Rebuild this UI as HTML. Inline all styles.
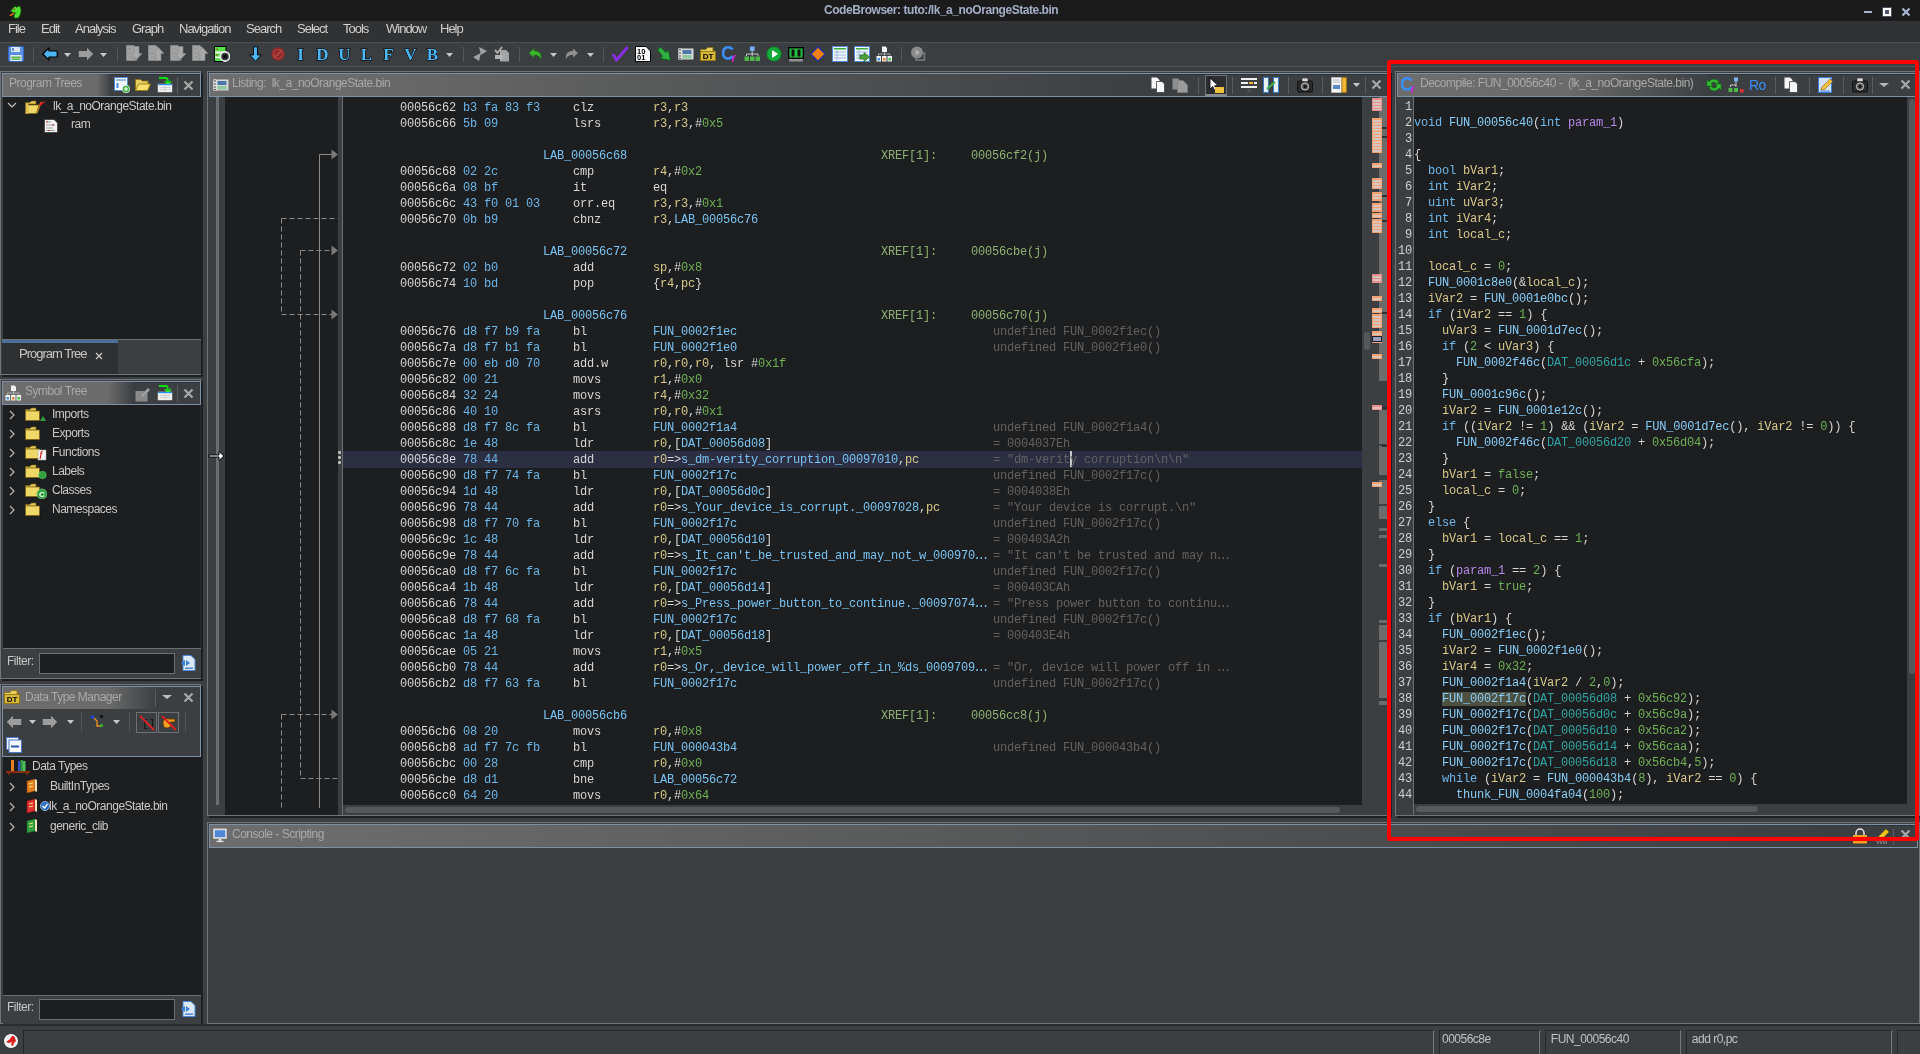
<!DOCTYPE html><html><head><meta charset="utf-8"><style>
*{margin:0;padding:0;box-sizing:border-box}
html,body{width:1920px;height:1054px;overflow:hidden;background:#3c3f41}
#root{position:absolute;left:0;top:0;width:1920px;height:1054px;overflow:hidden;will-change:transform;background:#3c3f41}
#root>div,#root>svg{position:absolute}
.ui{position:absolute;font-family:"Liberation Sans",sans-serif;font-size:12px;letter-spacing:-0.5px;color:#c4c4c4;white-space:pre;line-height:16px}
.mono{position:absolute;font-family:"Liberation Mono",monospace;font-size:12px;letter-spacing:-0.2px;white-space:pre;line-height:16px;color:#d6d6d6}
.hdr{position:absolute;border:1px solid #7d90a6}
</style></head><body><div id="root">
<div style="left:0px;top:0px;width:1920px;height:21px;background:#1b1b1b"></div>
<div class="ui" style="left:824px;top:2px;font-weight:bold;color:#a3aec6;letter-spacing:-0.45px">CodeBrowser: tuto:/lk_a_noOrangeState.bin</div>
<div style="left:0px;top:21px;width:1920px;height:21px;background:#303234"></div>
<div class="ui" style="left:8px;top:21px;color:#cfcfcf;font-size:13px;letter-spacing:-1px">File</div>
<div class="ui" style="left:41px;top:21px;color:#cfcfcf;font-size:13px;letter-spacing:-1px">Edit</div>
<div class="ui" style="left:75px;top:21px;color:#cfcfcf;font-size:13px;letter-spacing:-1px">Analysis</div>
<div class="ui" style="left:132px;top:21px;color:#cfcfcf;font-size:13px;letter-spacing:-1px">Graph</div>
<div class="ui" style="left:179px;top:21px;color:#cfcfcf;font-size:13px;letter-spacing:-1px">Navigation</div>
<div class="ui" style="left:246px;top:21px;color:#cfcfcf;font-size:13px;letter-spacing:-1px">Search</div>
<div class="ui" style="left:297px;top:21px;color:#cfcfcf;font-size:13px;letter-spacing:-1px">Select</div>
<div class="ui" style="left:343px;top:21px;color:#cfcfcf;font-size:13px;letter-spacing:-1px">Tools</div>
<div class="ui" style="left:386px;top:21px;color:#cfcfcf;font-size:13px;letter-spacing:-1px">Window</div>
<div class="ui" style="left:440px;top:21px;color:#cfcfcf;font-size:13px;letter-spacing:-1px">Help</div>
<div style="left:0px;top:42px;width:1920px;height:25px;background:#3b3e40;border-top:1px solid #4d5053;border-bottom:1px solid #505356"></div>
<div style="left:0px;top:67px;width:1920px;height:5px;background:#3b3e40"></div>
<div style="left:0px;top:71px;width:201px;height:304px;background:#3c3f41;border:1px solid #727578;box-shadow:2px 2px 0 #1f2022"></div>
<div style="left:2px;top:73px;width:199px;height:24px;border:1px solid #7d90a6;background:#3c3f41;box-shadow:inset 1px 1px 0 #2f3133"></div>
<div style="left:3px;top:74px;width:108px;height:22px;background:linear-gradient(to right,#6d6d6d 0px,#6b6b6b 94px,#3c3f41 100%)"></div>
<div style="left:3px;top:97px;width:198px;height:242px;background:#1d1e20"></div>
<div class="ui" style="left:9px;top:75px;color:#a9a9a9">Program Trees</div>
<div style="left:2px;top:339px;width:199px;height:35px;background:#3c3f41;border-top:1px solid #6c6f72"></div>
<div style="left:2px;top:340px;width:116px;height:34px;background:#2e3032;border-top:3px solid #4a6f9c"></div>
<div class="ui" style="left:19px;top:346px;color:#c6c6c6;font-size:13px;letter-spacing:-1px">Program Tree</div>
<div style="left:0px;top:379px;width:201px;height:300px;background:#3c3f41;border:1px solid #727578;box-shadow:2px 2px 0 #1f2022"></div>
<div style="left:2px;top:381px;width:199px;height:24px;border:1px solid #7d90a6;background:#3c3f41;box-shadow:inset 1px 1px 0 #2f3133"></div>
<div style="left:3px;top:382px;width:130px;height:22px;background:linear-gradient(to right,#6d6d6d 0px,#6b6b6b 105px,#3c3f41 100%)"></div>
<div style="left:3px;top:405px;width:198px;height:243px;background:#1d1e20;border-right:1px solid #2a2b2d"></div>
<div class="ui" style="left:25px;top:383px;color:#a9a9a9">Symbol Tree</div>
<div style="left:3px;top:648px;width:198px;height:30px;background:#3c3f41;border-top:1px solid #6c6f72"></div>
<div class="ui" style="left:7px;top:653px;color:#c6c6c6">Filter:</div>
<div style="left:39px;top:653px;width:136px;height:21px;background:#1d1e20;border:1px solid #6c6f72"></div>
<div style="left:0px;top:684px;width:201px;height:340px;background:#3c3f41;border:1px solid #727578;box-shadow:2px 2px 0 #1f2022"></div>
<div style="left:2px;top:686px;width:199px;height:71px;border:1px solid #7d90a6;background:#3c3f41"></div>
<div style="left:3px;top:687px;width:153px;height:22px;background:linear-gradient(to right,#6d6d6d 0px,#6b6b6b 105px,#3c3f41 100%)"></div>
<div class="ui" style="left:25px;top:689px;color:#a9a9a9">Data Type Manager</div>
<div style="left:3px;top:757px;width:198px;height:238px;background:#1d1e20"></div>
<div style="left:3px;top:995px;width:198px;height:29px;background:#3c3f41;border-top:1px solid #6c6f72"></div>
<div class="ui" style="left:7px;top:999px;color:#c6c6c6">Filter:</div>
<div style="left:39px;top:999px;width:136px;height:21px;background:#1d1e20;border:1px solid #6c6f72"></div>
<div style="left:207px;top:71px;width:1183px;height:745px;background:#3c3f41;border:1px solid #727578;box-shadow:2px 2px 0 #1f2022"></div>
<div style="left:209px;top:73px;width:1179px;height:24px;border:1px solid #7d90a6;background:#3c3f41;box-shadow:inset 1px 1px 0 #2f3133"></div>
<div style="left:210px;top:74px;width:940px;height:22px;background:linear-gradient(to right,#6d6d6d 0px,#6b6b6b 126px,#3c3f41 100%)"></div>
<div class="ui" style="left:232px;top:75px;color:#a9a9a9">Listing:  lk_a_noOrangeState.bin</div>
<div style="left:209px;top:97px;width:16px;height:718px;background:#3c3f41"></div>
<div style="left:216px;top:97px;width:3px;height:708px;background:#6b6e71"></div>
<div style="left:225px;top:97px;width:113px;height:718px;background:#1d1e20"></div>
<div style="left:338px;top:97px;width:4px;height:718px;background:#3c3f41"></div>
<div style="left:342px;top:97px;width:1px;height:718px;background:#6b6e71"></div>
<div style="left:343px;top:97px;width:1019px;height:708px;background:#1d1e20"></div>
<div style="left:343px;top:805px;width:1019px;height:10px;background:#3c3f41"></div>
<div style="left:1362px;top:97px;width:25px;height:718px;background:#3c3f41"></div>
<div style="left:1395px;top:71px;width:525px;height:745px;background:#3c3f41;border:1px solid #727578;box-shadow:2px 2px 0 #1f2022"></div>
<div style="left:1397px;top:73px;width:520px;height:24px;border:1px solid #7d90a6;background:#3c3f41;box-shadow:inset 1px 1px 0 #2f3133"></div>
<div style="left:1398px;top:74px;width:311px;height:22px;background:linear-gradient(to right,#6d6d6d 0px,#6b6b6b 168px,#3c3f41 100%)"></div>
<div class="ui" style="left:1420px;top:75px;color:#a9a9a9">Decompile: FUN_00056c40 -  (lk_a_noOrangeState.bin)</div>
<div style="left:1397px;top:97px;width:16px;height:718px;background:#3c3f41"></div>
<div style="left:1413px;top:97px;width:1px;height:718px;background:#6b6e71"></div>
<div style="left:1414px;top:97px;width:493px;height:707px;background:#1d1e20"></div>
<div style="left:1907px;top:97px;width:10px;height:718px;background:#3c3f41"></div>
<div style="left:207px;top:822px;width:1713px;height:202px;background:#3c3f41;border:1px solid #727578;box-shadow:2px 2px 0 #1f2022"></div>
<div style="left:209px;top:824px;width:1709px;height:24px;border:1px solid #7d90a6;background:#3c3f41;box-shadow:inset 1px 1px 0 #2f3133"></div>
<div style="left:210px;top:825px;width:1640px;height:22px;background:linear-gradient(to right,#6d6d6d 0px,#6b6b6b 126px,#3c3f41 100%)"></div>
<div class="ui" style="left:232px;top:826px;color:#a9a9a9">Console - Scripting</div>
<div style="left:0px;top:1024px;width:1920px;height:2px;background:#2a2b2d"></div>
<div style="left:0px;top:1026px;width:1920px;height:28px;background:#3c3f41"></div>
<div style="left:343px;top:451px;width:1019px;height:17px;background:#2c2e42"></div>
<div style="left:338px;top:451px;width:3px;height:3px;background:#bdbdbd;border-radius:1px"></div>
<div style="left:338px;top:456px;width:3px;height:3px;background:#bdbdbd;border-radius:1px"></div>
<div style="left:338px;top:461px;width:3px;height:3px;background:#bdbdbd;border-radius:1px"></div>
<div style="left:1070px;top:451px;width:2px;height:16px;background:#c8c8c8"></div>
<div class="mono" style="left:400px;top:100px;color:#d6d6d6">00056c62</div>
<div class="mono" style="left:463px;top:100px;color:#6ab6ea">b3 fa 83 f3</div>
<div class="mono" style="left:573px;top:100px;color:#d6d6d6">clz</div>
<div class="mono" style="left:653px;top:100px"><span style="color:#d9c98a">r3</span><span style="color:#d6d6d6">,</span><span style="color:#d9c98a">r3</span></div>
<div class="mono" style="left:400px;top:116px;color:#d6d6d6">00056c66</div>
<div class="mono" style="left:463px;top:116px;color:#6ab6ea">5b 09</div>
<div class="mono" style="left:573px;top:116px;color:#d6d6d6">lsrs</div>
<div class="mono" style="left:653px;top:116px"><span style="color:#d9c98a">r3</span><span style="color:#d6d6d6">,</span><span style="color:#d9c98a">r3</span><span style="color:#d6d6d6">,</span><span style="color:#d6d6d6">#</span><span style="color:#6fb255">0x5</span></div>
<div class="mono" style="left:543px;top:148px;color:#78c3f2">LAB_00056c68</div>
<div class="mono" style="left:881px;top:148px;color:#8db070">XREF[1]:</div>
<div class="mono" style="left:971px;top:148px;color:#8db070">00056cf2(j)</div>
<div class="mono" style="left:400px;top:164px;color:#d6d6d6">00056c68</div>
<div class="mono" style="left:463px;top:164px;color:#6ab6ea">02 2c</div>
<div class="mono" style="left:573px;top:164px;color:#d6d6d6">cmp</div>
<div class="mono" style="left:653px;top:164px"><span style="color:#d9c98a">r4</span><span style="color:#d6d6d6">,</span><span style="color:#d6d6d6">#</span><span style="color:#6fb255">0x2</span></div>
<div class="mono" style="left:400px;top:180px;color:#d6d6d6">00056c6a</div>
<div class="mono" style="left:463px;top:180px;color:#6ab6ea">08 bf</div>
<div class="mono" style="left:573px;top:180px;color:#d6d6d6">it</div>
<div class="mono" style="left:653px;top:180px"><span style="color:#d6d6d6">eq</span></div>
<div class="mono" style="left:400px;top:196px;color:#d6d6d6">00056c6c</div>
<div class="mono" style="left:463px;top:196px;color:#6ab6ea">43 f0 01 03</div>
<div class="mono" style="left:573px;top:196px;color:#d6d6d6">orr.eq</div>
<div class="mono" style="left:653px;top:196px"><span style="color:#d9c98a">r3</span><span style="color:#d6d6d6">,</span><span style="color:#d9c98a">r3</span><span style="color:#d6d6d6">,</span><span style="color:#d6d6d6">#</span><span style="color:#6fb255">0x1</span></div>
<div class="mono" style="left:400px;top:212px;color:#d6d6d6">00056c70</div>
<div class="mono" style="left:463px;top:212px;color:#6ab6ea">0b b9</div>
<div class="mono" style="left:573px;top:212px;color:#d6d6d6">cbnz</div>
<div class="mono" style="left:653px;top:212px"><span style="color:#d9c98a">r3</span><span style="color:#d6d6d6">,</span><span style="color:#78c3f2">LAB_00056c76</span></div>
<div class="mono" style="left:543px;top:244px;color:#78c3f2">LAB_00056c72</div>
<div class="mono" style="left:881px;top:244px;color:#8db070">XREF[1]:</div>
<div class="mono" style="left:971px;top:244px;color:#8db070">00056cbe(j)</div>
<div class="mono" style="left:400px;top:260px;color:#d6d6d6">00056c72</div>
<div class="mono" style="left:463px;top:260px;color:#6ab6ea">02 b0</div>
<div class="mono" style="left:573px;top:260px;color:#d6d6d6">add</div>
<div class="mono" style="left:653px;top:260px"><span style="color:#d9c98a">sp</span><span style="color:#d6d6d6">,</span><span style="color:#d6d6d6">#</span><span style="color:#6fb255">0x8</span></div>
<div class="mono" style="left:400px;top:276px;color:#d6d6d6">00056c74</div>
<div class="mono" style="left:463px;top:276px;color:#6ab6ea">10 bd</div>
<div class="mono" style="left:573px;top:276px;color:#d6d6d6">pop</div>
<div class="mono" style="left:653px;top:276px"><span style="color:#d6d6d6">{</span><span style="color:#d9c98a">r4</span><span style="color:#d6d6d6">,</span><span style="color:#d9c98a">pc</span><span style="color:#d6d6d6">}</span></div>
<div class="mono" style="left:543px;top:308px;color:#78c3f2">LAB_00056c76</div>
<div class="mono" style="left:881px;top:308px;color:#8db070">XREF[1]:</div>
<div class="mono" style="left:971px;top:308px;color:#8db070">00056c70(j)</div>
<div class="mono" style="left:400px;top:324px;color:#d6d6d6">00056c76</div>
<div class="mono" style="left:463px;top:324px;color:#6ab6ea">d8 f7 b9 fa</div>
<div class="mono" style="left:573px;top:324px;color:#d6d6d6">bl</div>
<div class="mono" style="left:653px;top:324px"><span style="color:#78c3f2">FUN_0002f1ec</span></div>
<div class="mono" style="left:993px;top:324px;color:#626262">undefined FUN_0002f1ec()</div>
<div class="mono" style="left:400px;top:340px;color:#d6d6d6">00056c7a</div>
<div class="mono" style="left:463px;top:340px;color:#6ab6ea">d8 f7 b1 fa</div>
<div class="mono" style="left:573px;top:340px;color:#d6d6d6">bl</div>
<div class="mono" style="left:653px;top:340px"><span style="color:#78c3f2">FUN_0002f1e0</span></div>
<div class="mono" style="left:993px;top:340px;color:#626262">undefined FUN_0002f1e0()</div>
<div class="mono" style="left:400px;top:356px;color:#d6d6d6">00056c7e</div>
<div class="mono" style="left:463px;top:356px;color:#6ab6ea">00 eb d0 70</div>
<div class="mono" style="left:573px;top:356px;color:#d6d6d6">add.w</div>
<div class="mono" style="left:653px;top:356px"><span style="color:#d9c98a">r0</span><span style="color:#d6d6d6">,</span><span style="color:#d9c98a">r0</span><span style="color:#d6d6d6">,</span><span style="color:#d9c98a">r0</span><span style="color:#d6d6d6">, lsr </span><span style="color:#d6d6d6">#</span><span style="color:#6fb255">0x1f</span></div>
<div class="mono" style="left:400px;top:372px;color:#d6d6d6">00056c82</div>
<div class="mono" style="left:463px;top:372px;color:#6ab6ea">00 21</div>
<div class="mono" style="left:573px;top:372px;color:#d6d6d6">movs</div>
<div class="mono" style="left:653px;top:372px"><span style="color:#d9c98a">r1</span><span style="color:#d6d6d6">,</span><span style="color:#d6d6d6">#</span><span style="color:#6fb255">0x0</span></div>
<div class="mono" style="left:400px;top:388px;color:#d6d6d6">00056c84</div>
<div class="mono" style="left:463px;top:388px;color:#6ab6ea">32 24</div>
<div class="mono" style="left:573px;top:388px;color:#d6d6d6">movs</div>
<div class="mono" style="left:653px;top:388px"><span style="color:#d9c98a">r4</span><span style="color:#d6d6d6">,</span><span style="color:#d6d6d6">#</span><span style="color:#6fb255">0x32</span></div>
<div class="mono" style="left:400px;top:404px;color:#d6d6d6">00056c86</div>
<div class="mono" style="left:463px;top:404px;color:#6ab6ea">40 10</div>
<div class="mono" style="left:573px;top:404px;color:#d6d6d6">asrs</div>
<div class="mono" style="left:653px;top:404px"><span style="color:#d9c98a">r0</span><span style="color:#d6d6d6">,</span><span style="color:#d9c98a">r0</span><span style="color:#d6d6d6">,</span><span style="color:#d6d6d6">#</span><span style="color:#6fb255">0x1</span></div>
<div class="mono" style="left:400px;top:420px;color:#d6d6d6">00056c88</div>
<div class="mono" style="left:463px;top:420px;color:#6ab6ea">d8 f7 8c fa</div>
<div class="mono" style="left:573px;top:420px;color:#d6d6d6">bl</div>
<div class="mono" style="left:653px;top:420px"><span style="color:#78c3f2">FUN_0002f1a4</span></div>
<div class="mono" style="left:993px;top:420px;color:#626262">undefined FUN_0002f1a4()</div>
<div class="mono" style="left:400px;top:436px;color:#d6d6d6">00056c8c</div>
<div class="mono" style="left:463px;top:436px;color:#6ab6ea">1e 48</div>
<div class="mono" style="left:573px;top:436px;color:#d6d6d6">ldr</div>
<div class="mono" style="left:653px;top:436px"><span style="color:#d9c98a">r0</span><span style="color:#d6d6d6">,[</span><span style="color:#78c3f2">DAT_00056d08</span><span style="color:#d6d6d6">]</span></div>
<div class="mono" style="left:993px;top:436px;color:#626262">= 0004037Eh</div>
<div class="mono" style="left:400px;top:452px;color:#d6d6d6">00056c8e</div>
<div class="mono" style="left:463px;top:452px;color:#6ab6ea">78 44</div>
<div class="mono" style="left:573px;top:452px;color:#d6d6d6">add</div>
<div class="mono" style="left:653px;top:452px"><span style="color:#d9c98a">r0</span><span style="color:#d6d6d6">=&gt;</span><span style="color:#78c3f2">s_dm-verity_corruption_00097010</span><span style="color:#d6d6d6">,</span><span style="color:#d9c98a">pc</span></div>
<div class="mono" style="left:993px;top:452px;color:#626262">= &quot;dm-verity corruption\n\n&quot;</div>
<div class="mono" style="left:400px;top:468px;color:#d6d6d6">00056c90</div>
<div class="mono" style="left:463px;top:468px;color:#6ab6ea">d8 f7 74 fa</div>
<div class="mono" style="left:573px;top:468px;color:#d6d6d6">bl</div>
<div class="mono" style="left:653px;top:468px"><span style="color:#78c3f2">FUN_0002f17c</span></div>
<div class="mono" style="left:993px;top:468px;color:#626262">undefined FUN_0002f17c()</div>
<div class="mono" style="left:400px;top:484px;color:#d6d6d6">00056c94</div>
<div class="mono" style="left:463px;top:484px;color:#6ab6ea">1d 48</div>
<div class="mono" style="left:573px;top:484px;color:#d6d6d6">ldr</div>
<div class="mono" style="left:653px;top:484px"><span style="color:#d9c98a">r0</span><span style="color:#d6d6d6">,[</span><span style="color:#78c3f2">DAT_00056d0c</span><span style="color:#d6d6d6">]</span></div>
<div class="mono" style="left:993px;top:484px;color:#626262">= 0004038Eh</div>
<div class="mono" style="left:400px;top:500px;color:#d6d6d6">00056c96</div>
<div class="mono" style="left:463px;top:500px;color:#6ab6ea">78 44</div>
<div class="mono" style="left:573px;top:500px;color:#d6d6d6">add</div>
<div class="mono" style="left:653px;top:500px"><span style="color:#d9c98a">r0</span><span style="color:#d6d6d6">=&gt;</span><span style="color:#78c3f2">s_Your_device_is_corrupt._00097028</span><span style="color:#d6d6d6">,</span><span style="color:#d9c98a">pc</span></div>
<div class="mono" style="left:993px;top:500px;color:#626262">= &quot;Your device is corrupt.\n&quot;</div>
<div class="mono" style="left:400px;top:516px;color:#d6d6d6">00056c98</div>
<div class="mono" style="left:463px;top:516px;color:#6ab6ea">d8 f7 70 fa</div>
<div class="mono" style="left:573px;top:516px;color:#d6d6d6">bl</div>
<div class="mono" style="left:653px;top:516px"><span style="color:#78c3f2">FUN_0002f17c</span></div>
<div class="mono" style="left:993px;top:516px;color:#626262">undefined FUN_0002f17c()</div>
<div class="mono" style="left:400px;top:532px;color:#d6d6d6">00056c9c</div>
<div class="mono" style="left:463px;top:532px;color:#6ab6ea">1c 48</div>
<div class="mono" style="left:573px;top:532px;color:#d6d6d6">ldr</div>
<div class="mono" style="left:653px;top:532px"><span style="color:#d9c98a">r0</span><span style="color:#d6d6d6">,[</span><span style="color:#78c3f2">DAT_00056d10</span><span style="color:#d6d6d6">]</span></div>
<div class="mono" style="left:993px;top:532px;color:#626262">= 000403A2h</div>
<div class="mono" style="left:400px;top:548px;color:#d6d6d6">00056c9e</div>
<div class="mono" style="left:463px;top:548px;color:#6ab6ea">78 44</div>
<div class="mono" style="left:573px;top:548px;color:#d6d6d6">add</div>
<div class="mono" style="left:653px;top:548px"><span style="color:#d9c98a">r0</span><span style="color:#d6d6d6">=&gt;</span><span style="color:#78c3f2">s_It_can&#x27;t_be_trusted_and_may_not_w_000970<span style="letter-spacing:-3px;margin-left:-1.5px">...</span></span></div>
<div class="mono" style="left:993px;top:548px;color:#626262">= &quot;It can&#x27;t be trusted and may n<span style="letter-spacing:-3px;margin-left:-1.5px">...</span></div>
<div class="mono" style="left:400px;top:564px;color:#d6d6d6">00056ca0</div>
<div class="mono" style="left:463px;top:564px;color:#6ab6ea">d8 f7 6c fa</div>
<div class="mono" style="left:573px;top:564px;color:#d6d6d6">bl</div>
<div class="mono" style="left:653px;top:564px"><span style="color:#78c3f2">FUN_0002f17c</span></div>
<div class="mono" style="left:993px;top:564px;color:#626262">undefined FUN_0002f17c()</div>
<div class="mono" style="left:400px;top:580px;color:#d6d6d6">00056ca4</div>
<div class="mono" style="left:463px;top:580px;color:#6ab6ea">1b 48</div>
<div class="mono" style="left:573px;top:580px;color:#d6d6d6">ldr</div>
<div class="mono" style="left:653px;top:580px"><span style="color:#d9c98a">r0</span><span style="color:#d6d6d6">,[</span><span style="color:#78c3f2">DAT_00056d14</span><span style="color:#d6d6d6">]</span></div>
<div class="mono" style="left:993px;top:580px;color:#626262">= 000403CAh</div>
<div class="mono" style="left:400px;top:596px;color:#d6d6d6">00056ca6</div>
<div class="mono" style="left:463px;top:596px;color:#6ab6ea">78 44</div>
<div class="mono" style="left:573px;top:596px;color:#d6d6d6">add</div>
<div class="mono" style="left:653px;top:596px"><span style="color:#d9c98a">r0</span><span style="color:#d6d6d6">=&gt;</span><span style="color:#78c3f2">s_Press_power_button_to_continue._00097074<span style="letter-spacing:-3px;margin-left:-1.5px">...</span></span></div>
<div class="mono" style="left:993px;top:596px;color:#626262">= &quot;Press power button to continu<span style="letter-spacing:-3px;margin-left:-1.5px">...</span></div>
<div class="mono" style="left:400px;top:612px;color:#d6d6d6">00056ca8</div>
<div class="mono" style="left:463px;top:612px;color:#6ab6ea">d8 f7 68 fa</div>
<div class="mono" style="left:573px;top:612px;color:#d6d6d6">bl</div>
<div class="mono" style="left:653px;top:612px"><span style="color:#78c3f2">FUN_0002f17c</span></div>
<div class="mono" style="left:993px;top:612px;color:#626262">undefined FUN_0002f17c()</div>
<div class="mono" style="left:400px;top:628px;color:#d6d6d6">00056cac</div>
<div class="mono" style="left:463px;top:628px;color:#6ab6ea">1a 48</div>
<div class="mono" style="left:573px;top:628px;color:#d6d6d6">ldr</div>
<div class="mono" style="left:653px;top:628px"><span style="color:#d9c98a">r0</span><span style="color:#d6d6d6">,[</span><span style="color:#78c3f2">DAT_00056d18</span><span style="color:#d6d6d6">]</span></div>
<div class="mono" style="left:993px;top:628px;color:#626262">= 000403E4h</div>
<div class="mono" style="left:400px;top:644px;color:#d6d6d6">00056cae</div>
<div class="mono" style="left:463px;top:644px;color:#6ab6ea">05 21</div>
<div class="mono" style="left:573px;top:644px;color:#d6d6d6">movs</div>
<div class="mono" style="left:653px;top:644px"><span style="color:#d9c98a">r1</span><span style="color:#d6d6d6">,</span><span style="color:#d6d6d6">#</span><span style="color:#6fb255">0x5</span></div>
<div class="mono" style="left:400px;top:660px;color:#d6d6d6">00056cb0</div>
<div class="mono" style="left:463px;top:660px;color:#6ab6ea">78 44</div>
<div class="mono" style="left:573px;top:660px;color:#d6d6d6">add</div>
<div class="mono" style="left:653px;top:660px"><span style="color:#d9c98a">r0</span><span style="color:#d6d6d6">=&gt;</span><span style="color:#78c3f2">s_Or,_device_will_power_off_in_%ds_0009709<span style="letter-spacing:-3px;margin-left:-1.5px">...</span></span></div>
<div class="mono" style="left:993px;top:660px;color:#626262">= &quot;Or, device will power off in <span style="letter-spacing:-3px;margin-left:-1.5px">...</span></div>
<div class="mono" style="left:400px;top:676px;color:#d6d6d6">00056cb2</div>
<div class="mono" style="left:463px;top:676px;color:#6ab6ea">d8 f7 63 fa</div>
<div class="mono" style="left:573px;top:676px;color:#d6d6d6">bl</div>
<div class="mono" style="left:653px;top:676px"><span style="color:#78c3f2">FUN_0002f17c</span></div>
<div class="mono" style="left:993px;top:676px;color:#626262">undefined FUN_0002f17c()</div>
<div class="mono" style="left:543px;top:708px;color:#78c3f2">LAB_00056cb6</div>
<div class="mono" style="left:881px;top:708px;color:#8db070">XREF[1]:</div>
<div class="mono" style="left:971px;top:708px;color:#8db070">00056cc8(j)</div>
<div class="mono" style="left:400px;top:724px;color:#d6d6d6">00056cb6</div>
<div class="mono" style="left:463px;top:724px;color:#6ab6ea">08 20</div>
<div class="mono" style="left:573px;top:724px;color:#d6d6d6">movs</div>
<div class="mono" style="left:653px;top:724px"><span style="color:#d9c98a">r0</span><span style="color:#d6d6d6">,</span><span style="color:#d6d6d6">#</span><span style="color:#6fb255">0x8</span></div>
<div class="mono" style="left:400px;top:740px;color:#d6d6d6">00056cb8</div>
<div class="mono" style="left:463px;top:740px;color:#6ab6ea">ad f7 7c fb</div>
<div class="mono" style="left:573px;top:740px;color:#d6d6d6">bl</div>
<div class="mono" style="left:653px;top:740px"><span style="color:#78c3f2">FUN_000043b4</span></div>
<div class="mono" style="left:993px;top:740px;color:#626262">undefined FUN_000043b4()</div>
<div class="mono" style="left:400px;top:756px;color:#d6d6d6">00056cbc</div>
<div class="mono" style="left:463px;top:756px;color:#6ab6ea">00 28</div>
<div class="mono" style="left:573px;top:756px;color:#d6d6d6">cmp</div>
<div class="mono" style="left:653px;top:756px"><span style="color:#d9c98a">r0</span><span style="color:#d6d6d6">,</span><span style="color:#d6d6d6">#</span><span style="color:#6fb255">0x0</span></div>
<div class="mono" style="left:400px;top:772px;color:#d6d6d6">00056cbe</div>
<div class="mono" style="left:463px;top:772px;color:#6ab6ea">d8 d1</div>
<div class="mono" style="left:573px;top:772px;color:#d6d6d6">bne</div>
<div class="mono" style="left:653px;top:772px"><span style="color:#78c3f2">LAB_00056c72</span></div>
<div class="mono" style="left:400px;top:788px;color:#d6d6d6">00056cc0</div>
<div class="mono" style="left:463px;top:788px;color:#6ab6ea">64 20</div>
<div class="mono" style="left:573px;top:788px;color:#d6d6d6">movs</div>
<div class="mono" style="left:653px;top:788px"><span style="color:#d9c98a">r0</span><span style="color:#d6d6d6">,</span><span style="color:#d6d6d6">#</span><span style="color:#6fb255">0x64</span></div>
<div class="mono" style="left:1393px;top:99px;width:19px;text-align:right;color:#cfcfcf;letter-spacing:-0.2px">1</div>
<div class="mono" style="left:1393px;top:115px;width:19px;text-align:right;color:#cfcfcf;letter-spacing:-0.2px">2</div>
<div class="mono" style="left:1414px;top:115px"><span style="color:#6fb8ec;">void</span> <span style="color:#d6d6d6;"></span><span style="color:#86cdf7;">FUN_00056c40</span><span style="color:#d6d6d6;">(</span><span style="color:#6fb8ec;">int</span> <span style="color:#d6d6d6;"></span><span style="color:#b48ae6;">param_1</span><span style="color:#d6d6d6;">)</span></div>
<div class="mono" style="left:1393px;top:131px;width:19px;text-align:right;color:#cfcfcf;letter-spacing:-0.2px">3</div>
<div class="mono" style="left:1393px;top:147px;width:19px;text-align:right;color:#cfcfcf;letter-spacing:-0.2px">4</div>
<div class="mono" style="left:1414px;top:147px"><span style="color:#d6d6d6;">{</span></div>
<div class="mono" style="left:1393px;top:163px;width:19px;text-align:right;color:#cfcfcf;letter-spacing:-0.2px">5</div>
<div class="mono" style="left:1414px;top:163px">  <span style="color:#6fb8ec;">bool</span> <span style="color:#d6d6d6;"></span><span style="color:#d9c98a;">bVar1</span><span style="color:#d6d6d6;">;</span></div>
<div class="mono" style="left:1393px;top:179px;width:19px;text-align:right;color:#cfcfcf;letter-spacing:-0.2px">6</div>
<div class="mono" style="left:1414px;top:179px">  <span style="color:#6fb8ec;">int</span> <span style="color:#d6d6d6;"></span><span style="color:#d9c98a;">iVar2</span><span style="color:#d6d6d6;">;</span></div>
<div class="mono" style="left:1393px;top:195px;width:19px;text-align:right;color:#cfcfcf;letter-spacing:-0.2px">7</div>
<div class="mono" style="left:1414px;top:195px">  <span style="color:#6fb8ec;">uint</span> <span style="color:#d6d6d6;"></span><span style="color:#d9c98a;">uVar3</span><span style="color:#d6d6d6;">;</span></div>
<div class="mono" style="left:1393px;top:211px;width:19px;text-align:right;color:#cfcfcf;letter-spacing:-0.2px">8</div>
<div class="mono" style="left:1414px;top:211px">  <span style="color:#6fb8ec;">int</span> <span style="color:#d6d6d6;"></span><span style="color:#d9c98a;">iVar4</span><span style="color:#d6d6d6;">;</span></div>
<div class="mono" style="left:1393px;top:227px;width:19px;text-align:right;color:#cfcfcf;letter-spacing:-0.2px">9</div>
<div class="mono" style="left:1414px;top:227px">  <span style="color:#6fb8ec;">int</span> <span style="color:#d6d6d6;"></span><span style="color:#d9c98a;">local_c</span><span style="color:#d6d6d6;">;</span></div>
<div class="mono" style="left:1393px;top:243px;width:19px;text-align:right;color:#cfcfcf;letter-spacing:-0.2px">10</div>
<div class="mono" style="left:1393px;top:259px;width:19px;text-align:right;color:#cfcfcf;letter-spacing:-0.2px">11</div>
<div class="mono" style="left:1414px;top:259px">  <span style="color:#d9c98a;">local_c</span> <span style="color:#d6d6d6;">= </span><span style="color:#6fb255;">0</span><span style="color:#d6d6d6;">;</span></div>
<div class="mono" style="left:1393px;top:275px;width:19px;text-align:right;color:#cfcfcf;letter-spacing:-0.2px">12</div>
<div class="mono" style="left:1414px;top:275px">  <span style="color:#86cdf7;">FUN_0001c8e0</span><span style="color:#d6d6d6;">(&amp;</span><span style="color:#d9c98a;">local_c</span><span style="color:#d6d6d6;">);</span></div>
<div class="mono" style="left:1393px;top:291px;width:19px;text-align:right;color:#cfcfcf;letter-spacing:-0.2px">13</div>
<div class="mono" style="left:1414px;top:291px">  <span style="color:#d9c98a;">iVar2</span> <span style="color:#d6d6d6;">= </span><span style="color:#86cdf7;">FUN_0001e0bc</span><span style="color:#d6d6d6;">();</span></div>
<div class="mono" style="left:1393px;top:307px;width:19px;text-align:right;color:#cfcfcf;letter-spacing:-0.2px">14</div>
<div class="mono" style="left:1414px;top:307px">  <span style="color:#6fb8ec;">if</span> <span style="color:#d6d6d6;">(</span><span style="color:#d9c98a;">iVar2</span> <span style="color:#d6d6d6;">== </span><span style="color:#6fb255;">1</span><span style="color:#d6d6d6;">) {</span></div>
<div class="mono" style="left:1393px;top:323px;width:19px;text-align:right;color:#cfcfcf;letter-spacing:-0.2px">15</div>
<div class="mono" style="left:1414px;top:323px">    <span style="color:#d9c98a;">uVar3</span> <span style="color:#d6d6d6;">= </span><span style="color:#86cdf7;">FUN_0001d7ec</span><span style="color:#d6d6d6;">();</span></div>
<div class="mono" style="left:1393px;top:339px;width:19px;text-align:right;color:#cfcfcf;letter-spacing:-0.2px">16</div>
<div class="mono" style="left:1414px;top:339px">    <span style="color:#6fb8ec;">if</span> <span style="color:#d6d6d6;">(</span><span style="color:#6fb255;">2</span> <span style="color:#d6d6d6;">&lt; </span><span style="color:#d9c98a;">uVar3</span><span style="color:#d6d6d6;">) {</span></div>
<div class="mono" style="left:1393px;top:355px;width:19px;text-align:right;color:#cfcfcf;letter-spacing:-0.2px">17</div>
<div class="mono" style="left:1414px;top:355px">      <span style="color:#86cdf7;">FUN_0002f46c</span><span style="color:#d6d6d6;">(</span><span style="color:#2fa3a3;">DAT_00056d1c</span> <span style="color:#d6d6d6;">+ </span><span style="color:#6fb255;">0x56cfa</span><span style="color:#d6d6d6;">);</span></div>
<div class="mono" style="left:1393px;top:371px;width:19px;text-align:right;color:#cfcfcf;letter-spacing:-0.2px">18</div>
<div class="mono" style="left:1414px;top:371px">    <span style="color:#d6d6d6;">}</span></div>
<div class="mono" style="left:1393px;top:387px;width:19px;text-align:right;color:#cfcfcf;letter-spacing:-0.2px">19</div>
<div class="mono" style="left:1414px;top:387px">    <span style="color:#86cdf7;">FUN_0001c96c</span><span style="color:#d6d6d6;">();</span></div>
<div class="mono" style="left:1393px;top:403px;width:19px;text-align:right;color:#cfcfcf;letter-spacing:-0.2px">20</div>
<div class="mono" style="left:1414px;top:403px">    <span style="color:#d9c98a;">iVar2</span> <span style="color:#d6d6d6;">= </span><span style="color:#86cdf7;">FUN_0001e12c</span><span style="color:#d6d6d6;">();</span></div>
<div class="mono" style="left:1393px;top:419px;width:19px;text-align:right;color:#cfcfcf;letter-spacing:-0.2px">21</div>
<div class="mono" style="left:1414px;top:419px">    <span style="color:#6fb8ec;">if</span> <span style="color:#d6d6d6;">((</span><span style="color:#d9c98a;">iVar2</span> <span style="color:#d6d6d6;">!= </span><span style="color:#6fb255;">1</span><span style="color:#d6d6d6;">) &amp;&amp; (</span><span style="color:#d9c98a;">iVar2</span> <span style="color:#d6d6d6;">= </span><span style="color:#86cdf7;">FUN_0001d7ec</span><span style="color:#d6d6d6;">(), </span><span style="color:#d9c98a;">iVar2</span> <span style="color:#d6d6d6;">!= </span><span style="color:#6fb255;">0</span><span style="color:#d6d6d6;">)) {</span></div>
<div class="mono" style="left:1393px;top:435px;width:19px;text-align:right;color:#cfcfcf;letter-spacing:-0.2px">22</div>
<div class="mono" style="left:1414px;top:435px">      <span style="color:#86cdf7;">FUN_0002f46c</span><span style="color:#d6d6d6;">(</span><span style="color:#2fa3a3;">DAT_00056d20</span> <span style="color:#d6d6d6;">+ </span><span style="color:#6fb255;">0x56d04</span><span style="color:#d6d6d6;">);</span></div>
<div class="mono" style="left:1393px;top:451px;width:19px;text-align:right;color:#cfcfcf;letter-spacing:-0.2px">23</div>
<div class="mono" style="left:1414px;top:451px">    <span style="color:#d6d6d6;">}</span></div>
<div class="mono" style="left:1393px;top:467px;width:19px;text-align:right;color:#cfcfcf;letter-spacing:-0.2px">24</div>
<div class="mono" style="left:1414px;top:467px">    <span style="color:#d9c98a;">bVar1</span> <span style="color:#d6d6d6;">= </span><span style="color:#6fb255;">false</span><span style="color:#d6d6d6;">;</span></div>
<div class="mono" style="left:1393px;top:483px;width:19px;text-align:right;color:#cfcfcf;letter-spacing:-0.2px">25</div>
<div class="mono" style="left:1414px;top:483px">    <span style="color:#d9c98a;">local_c</span> <span style="color:#d6d6d6;">= </span><span style="color:#6fb255;">0</span><span style="color:#d6d6d6;">;</span></div>
<div class="mono" style="left:1393px;top:499px;width:19px;text-align:right;color:#cfcfcf;letter-spacing:-0.2px">26</div>
<div class="mono" style="left:1414px;top:499px">  <span style="color:#d6d6d6;">}</span></div>
<div class="mono" style="left:1393px;top:515px;width:19px;text-align:right;color:#cfcfcf;letter-spacing:-0.2px">27</div>
<div class="mono" style="left:1414px;top:515px">  <span style="color:#6fb8ec;">else</span> <span style="color:#d6d6d6;">{</span></div>
<div class="mono" style="left:1393px;top:531px;width:19px;text-align:right;color:#cfcfcf;letter-spacing:-0.2px">28</div>
<div class="mono" style="left:1414px;top:531px">    <span style="color:#d9c98a;">bVar1</span> <span style="color:#d6d6d6;">= </span><span style="color:#d9c98a;">local_c</span> <span style="color:#d6d6d6;">== </span><span style="color:#6fb255;">1</span><span style="color:#d6d6d6;">;</span></div>
<div class="mono" style="left:1393px;top:547px;width:19px;text-align:right;color:#cfcfcf;letter-spacing:-0.2px">29</div>
<div class="mono" style="left:1414px;top:547px">  <span style="color:#d6d6d6;">}</span></div>
<div class="mono" style="left:1393px;top:563px;width:19px;text-align:right;color:#cfcfcf;letter-spacing:-0.2px">30</div>
<div class="mono" style="left:1414px;top:563px">  <span style="color:#6fb8ec;">if</span> <span style="color:#d6d6d6;">(</span><span style="color:#b48ae6;">param_1</span> <span style="color:#d6d6d6;">== </span><span style="color:#6fb255;">2</span><span style="color:#d6d6d6;">) {</span></div>
<div class="mono" style="left:1393px;top:579px;width:19px;text-align:right;color:#cfcfcf;letter-spacing:-0.2px">31</div>
<div class="mono" style="left:1414px;top:579px">    <span style="color:#d9c98a;">bVar1</span> <span style="color:#d6d6d6;">= </span><span style="color:#6fb255;">true</span><span style="color:#d6d6d6;">;</span></div>
<div class="mono" style="left:1393px;top:595px;width:19px;text-align:right;color:#cfcfcf;letter-spacing:-0.2px">32</div>
<div class="mono" style="left:1414px;top:595px">  <span style="color:#d6d6d6;">}</span></div>
<div class="mono" style="left:1393px;top:611px;width:19px;text-align:right;color:#cfcfcf;letter-spacing:-0.2px">33</div>
<div class="mono" style="left:1414px;top:611px">  <span style="color:#6fb8ec;">if</span> <span style="color:#d6d6d6;">(</span><span style="color:#d9c98a;">bVar1</span><span style="color:#d6d6d6;">) {</span></div>
<div class="mono" style="left:1393px;top:627px;width:19px;text-align:right;color:#cfcfcf;letter-spacing:-0.2px">34</div>
<div class="mono" style="left:1414px;top:627px">    <span style="color:#86cdf7;">FUN_0002f1ec</span><span style="color:#d6d6d6;">();</span></div>
<div class="mono" style="left:1393px;top:643px;width:19px;text-align:right;color:#cfcfcf;letter-spacing:-0.2px">35</div>
<div class="mono" style="left:1414px;top:643px">    <span style="color:#d9c98a;">iVar2</span> <span style="color:#d6d6d6;">= </span><span style="color:#86cdf7;">FUN_0002f1e0</span><span style="color:#d6d6d6;">();</span></div>
<div class="mono" style="left:1393px;top:659px;width:19px;text-align:right;color:#cfcfcf;letter-spacing:-0.2px">36</div>
<div class="mono" style="left:1414px;top:659px">    <span style="color:#d9c98a;">iVar4</span> <span style="color:#d6d6d6;">= </span><span style="color:#6fb255;">0x32</span><span style="color:#d6d6d6;">;</span></div>
<div class="mono" style="left:1393px;top:675px;width:19px;text-align:right;color:#cfcfcf;letter-spacing:-0.2px">37</div>
<div class="mono" style="left:1414px;top:675px">    <span style="color:#86cdf7;">FUN_0002f1a4</span><span style="color:#d6d6d6;">(</span><span style="color:#d9c98a;">iVar2</span> <span style="color:#d6d6d6;">/ </span><span style="color:#6fb255;">2</span><span style="color:#d6d6d6;">,</span><span style="color:#6fb255;">0</span><span style="color:#d6d6d6;">);</span></div>
<div class="mono" style="left:1393px;top:691px;width:19px;text-align:right;color:#cfcfcf;letter-spacing:-0.2px">38</div>
<div class="mono" style="left:1414px;top:691px">    <span style="color:#d6d6d6;"></span><span style="color:#86cdf7;background:#4e5040;">FUN_0002f17c</span><span style="color:#d6d6d6;">(</span><span style="color:#2fa3a3;">DAT_00056d08</span> <span style="color:#d6d6d6;">+ </span><span style="color:#6fb255;">0x56c92</span><span style="color:#d6d6d6;">);</span></div>
<div class="mono" style="left:1393px;top:707px;width:19px;text-align:right;color:#cfcfcf;letter-spacing:-0.2px">39</div>
<div class="mono" style="left:1414px;top:707px">    <span style="color:#86cdf7;">FUN_0002f17c</span><span style="color:#d6d6d6;">(</span><span style="color:#2fa3a3;">DAT_00056d0c</span> <span style="color:#d6d6d6;">+ </span><span style="color:#6fb255;">0x56c9a</span><span style="color:#d6d6d6;">);</span></div>
<div class="mono" style="left:1393px;top:723px;width:19px;text-align:right;color:#cfcfcf;letter-spacing:-0.2px">40</div>
<div class="mono" style="left:1414px;top:723px">    <span style="color:#86cdf7;">FUN_0002f17c</span><span style="color:#d6d6d6;">(</span><span style="color:#2fa3a3;">DAT_00056d10</span> <span style="color:#d6d6d6;">+ </span><span style="color:#6fb255;">0x56ca2</span><span style="color:#d6d6d6;">);</span></div>
<div class="mono" style="left:1393px;top:739px;width:19px;text-align:right;color:#cfcfcf;letter-spacing:-0.2px">41</div>
<div class="mono" style="left:1414px;top:739px">    <span style="color:#86cdf7;">FUN_0002f17c</span><span style="color:#d6d6d6;">(</span><span style="color:#2fa3a3;">DAT_00056d14</span> <span style="color:#d6d6d6;">+ </span><span style="color:#6fb255;">0x56caa</span><span style="color:#d6d6d6;">);</span></div>
<div class="mono" style="left:1393px;top:755px;width:19px;text-align:right;color:#cfcfcf;letter-spacing:-0.2px">42</div>
<div class="mono" style="left:1414px;top:755px">    <span style="color:#86cdf7;">FUN_0002f17c</span><span style="color:#d6d6d6;">(</span><span style="color:#2fa3a3;">DAT_00056d18</span> <span style="color:#d6d6d6;">+ </span><span style="color:#6fb255;">0x56cb4</span><span style="color:#d6d6d6;">,</span><span style="color:#6fb255;">5</span><span style="color:#d6d6d6;">);</span></div>
<div class="mono" style="left:1393px;top:771px;width:19px;text-align:right;color:#cfcfcf;letter-spacing:-0.2px">43</div>
<div class="mono" style="left:1414px;top:771px">    <span style="color:#6fb8ec;">while</span> <span style="color:#d6d6d6;">(</span><span style="color:#d9c98a;">iVar2</span> <span style="color:#d6d6d6;">= </span><span style="color:#86cdf7;">FUN_000043b4</span><span style="color:#d6d6d6;">(</span><span style="color:#6fb255;">8</span><span style="color:#d6d6d6;">), </span><span style="color:#d9c98a;">iVar2</span> <span style="color:#d6d6d6;">== </span><span style="color:#6fb255;">0</span><span style="color:#d6d6d6;">) {</span></div>
<div class="mono" style="left:1393px;top:787px;width:19px;text-align:right;color:#cfcfcf;letter-spacing:-0.2px">44</div>
<div class="mono" style="left:1414px;top:787px">      <span style="color:#86cdf7;">thunk_FUN_0004fa04</span><span style="color:#d6d6d6;">(</span><span style="color:#6fb255;">100</span><span style="color:#d6d6d6;">);</span></div>
<svg style="left:225px;top:97px" width="113" height="711" viewBox="225 97 113 711"><line x1="319.5" y1="154.5" x2="319.5" y2="808" stroke="#8a8a8a" stroke-width="1"/><line x1="319.5" y1="154.5" x2="332" y2="154.5" stroke="#8a8a8a" stroke-width="1"/><path d="M331.5 149.5 L338 154.5 L331.5 159.5 Z" fill="#7a7a7a"/><line x1="281.5" y1="218.5" x2="338" y2="218.5" stroke="#8a8a8a" stroke-width="1" stroke-dasharray="5,3"/><line x1="281.5" y1="218.5" x2="281.5" y2="314.5" stroke="#8a8a8a" stroke-width="1" stroke-dasharray="5,3"/><line x1="281.5" y1="314.5" x2="332" y2="314.5" stroke="#8a8a8a" stroke-width="1" stroke-dasharray="5,3"/><path d="M331.5 309.5 L338 314.5 L331.5 319.5 Z" fill="#7a7a7a"/><line x1="300.5" y1="250.5" x2="332" y2="250.5" stroke="#8a8a8a" stroke-width="1" stroke-dasharray="5,3"/><line x1="300.5" y1="250.5" x2="300.5" y2="778.5" stroke="#8a8a8a" stroke-width="1" stroke-dasharray="5,3"/><line x1="300.5" y1="778.5" x2="338" y2="778.5" stroke="#8a8a8a" stroke-width="1" stroke-dasharray="5,3"/><path d="M331.5 245.5 L338 250.5 L331.5 255.5 Z" fill="#7a7a7a"/><line x1="281.5" y1="714.5" x2="332" y2="714.5" stroke="#8a8a8a" stroke-width="1" stroke-dasharray="5,3"/><line x1="281.5" y1="714.5" x2="281.5" y2="808" stroke="#8a8a8a" stroke-width="1" stroke-dasharray="5,3"/><path d="M331.5 709.5 L338 714.5 L331.5 719.5 Z" fill="#7a7a7a"/></svg>
<div style="left:1379px;top:97px;width:8px;height:284px;background:#6c6c6c"></div>
<div style="left:1379px;top:410px;width:8px;height:34px;background:#6c6c6c"></div>
<div style="left:1379px;top:446px;width:8px;height:29px;background:#6c6c6c"></div>
<div style="left:1379px;top:480px;width:8px;height:24px;background:#6c6c6c"></div>
<div style="left:1379px;top:506px;width:8px;height:13px;background:#6c6c6c"></div>
<div style="left:1379px;top:528px;width:8px;height:3px;background:#6c6c6c"></div>
<div style="left:1379px;top:535px;width:8px;height:3px;background:#6c6c6c"></div>
<div style="left:1379px;top:564px;width:8px;height:3px;background:#6c6c6c"></div>
<div style="left:1379px;top:620px;width:8px;height:3px;background:#6c6c6c"></div>
<div style="left:1379px;top:625px;width:8px;height:15px;background:#6c6c6c"></div>
<div style="left:1379px;top:642px;width:8px;height:56px;background:#6c6c6c"></div>
<div style="left:1379px;top:701px;width:8px;height:4px;background:#6c6c6c"></div>
<div style="left:1382px;top:127px;width:5px;height:2px;background:#2e3033"></div>
<div style="left:1382px;top:136px;width:5px;height:2px;background:#2e3033"></div>
<div style="left:1382px;top:195px;width:5px;height:2px;background:#2e3033"></div>
<div style="left:1382px;top:220px;width:5px;height:2px;background:#2e3033"></div>
<div style="left:1382px;top:312px;width:5px;height:2px;background:#2e3033"></div>
<div style="left:1382px;top:407px;width:5px;height:2px;background:#2e3033"></div>
<div style="left:1382px;top:445px;width:5px;height:2px;background:#2e3033"></div>
<div style="left:1372px;top:98px;width:10px;height:13px;background:repeating-linear-gradient(to bottom,#e88c8c 0px,#e88c8c 1px,#d8c6be 1px,#d8c6be 3px);border:1px solid #e88c8c"></div>
<div style="left:1372px;top:118px;width:10px;height:35px;background:repeating-linear-gradient(to bottom,#f4a070 0px,#f4a070 1px,#d8c6be 1px,#d8c6be 3px);border:1px solid #f4a070"></div>
<div style="left:1372px;top:163px;width:10px;height:5px;background:repeating-linear-gradient(to bottom,#f4a070 0px,#f4a070 1px,#d8c6be 1px,#d8c6be 3px);border:1px solid #f4a070"></div>
<div style="left:1372px;top:178px;width:10px;height:11px;background:repeating-linear-gradient(to bottom,#f4a070 0px,#f4a070 1px,#d8c6be 1px,#d8c6be 3px);border:1px solid #f4a070"></div>
<div style="left:1372px;top:192px;width:10px;height:9px;background:repeating-linear-gradient(to bottom,#f4a070 0px,#f4a070 1px,#d8c6be 1px,#d8c6be 3px);border:1px solid #f4a070"></div>
<div style="left:1372px;top:203px;width:10px;height:9px;background:repeating-linear-gradient(to bottom,#f4a070 0px,#f4a070 1px,#d8c6be 1px,#d8c6be 3px);border:1px solid #f4a070"></div>
<div style="left:1372px;top:213px;width:10px;height:5px;background:repeating-linear-gradient(to bottom,#f4a070 0px,#f4a070 1px,#d8c6be 1px,#d8c6be 3px);border:1px solid #f4a070"></div>
<div style="left:1372px;top:219px;width:10px;height:14px;background:repeating-linear-gradient(to bottom,#f4a070 0px,#f4a070 1px,#d8c6be 1px,#d8c6be 3px);border:1px solid #f4a070"></div>
<div style="left:1372px;top:274px;width:10px;height:9px;background:repeating-linear-gradient(to bottom,#e88c8c 0px,#e88c8c 1px,#d8c6be 1px,#d8c6be 3px);border:1px solid #e88c8c"></div>
<div style="left:1372px;top:296px;width:10px;height:5px;background:repeating-linear-gradient(to bottom,#f4a070 0px,#f4a070 1px,#d8c6be 1px,#d8c6be 3px);border:1px solid #f4a070"></div>
<div style="left:1372px;top:308px;width:10px;height:5px;background:repeating-linear-gradient(to bottom,#f4a070 0px,#f4a070 1px,#d8c6be 1px,#d8c6be 3px);border:1px solid #f4a070"></div>
<div style="left:1372px;top:314px;width:10px;height:14px;background:repeating-linear-gradient(to bottom,#f4a070 0px,#f4a070 1px,#d8c6be 1px,#d8c6be 3px);border:1px solid #f4a070"></div>
<div style="left:1372px;top:331px;width:10px;height:5px;background:repeating-linear-gradient(to bottom,#f4a070 0px,#f4a070 1px,#d8c6be 1px,#d8c6be 3px);border:1px solid #f4a070"></div>
<div style="left:1372px;top:341px;width:10px;height:2px;background:repeating-linear-gradient(to bottom,#f4a070 0px,#f4a070 1px,#d8c6be 1px,#d8c6be 3px);border:1px solid #f4a070"></div>
<div style="left:1372px;top:354px;width:10px;height:5px;background:repeating-linear-gradient(to bottom,#f4a070 0px,#f4a070 1px,#d8c6be 1px,#d8c6be 3px);border:1px solid #f4a070"></div>
<div style="left:1372px;top:405px;width:10px;height:5px;background:repeating-linear-gradient(to bottom,#e88c8c 0px,#e88c8c 1px,#d8c6be 1px,#d8c6be 3px);border:1px solid #e88c8c"></div>
<div style="left:1372px;top:482px;width:10px;height:5px;background:repeating-linear-gradient(to bottom,#f4a070 0px,#f4a070 1px,#d8c6be 1px,#d8c6be 3px);border:1px solid #f4a070"></div>
<div style="left:1372px;top:336px;width:10px;height:6px;background:#9aa0b8;border:1px solid #1a1c30"></div>
<div style="left:1364px;top:332px;width:6px;height:18px;background:#55585b;border-radius:3px"></div>
<div style="left:345px;top:807px;width:995px;height:6px;background:#55595c;border-radius:3px"></div>
<div style="left:1416px;top:806px;width:342px;height:6px;background:#55595c;border-radius:3px"></div>
<div style="left:1909px;top:99px;width:6px;height:575px;background:#55595c;border-radius:3px"></div>
<svg style="left:0px;top:0px" width="24" height="24" viewBox="0 0 24 24"><path d="M10.5 11 L12.5 9 L14 7 L15.5 6.5 L16.5 7.5 L18 6.5 L19.5 6 L20.5 8 L21 10.5 L20.5 13.5 L19.5 16 L18 18 L14.5 18 L14 16 L15 13.5 L16 12.5 L14.5 12.8 L12.5 12 Z" fill="#4ee030" stroke="#1e6a10" stroke-width="0.6"/><path d="M9 15.5 L13.5 12.5 L14.5 13.5 L11 16 Z" fill="#f07010"/><circle cx="14.5" cy="9.3" r="0.8" fill="#c03010"/></svg>
<div style="left:1864px;top:11px;width:8px;height:2px;background:#a8b4d0"></div>
<div style="left:1882px;top:7px;width:10px;height:10px;background:#ffffff;border:1px solid #4a5060"></div>
<div style="left:1885px;top:10px;width:4px;height:4px;background:#4e5566"></div>
<svg style="left:1901px;top:7px" width="10" height="10" viewBox="0 0 10 10"><path d="M1.5 1.5 L8.5 8.5 M8.5 1.5 L1.5 8.5" stroke="#a8b4d0" stroke-width="2.2"/></svg>
<svg style="left:8px;top:46px" width="16" height="16" viewBox="0 0 16 16"><rect x="0.5" y="0.5" width="15" height="15" rx="1.5" fill="#5b8fe4" stroke="#3466c0"/><rect x="3" y="1" width="9" height="5" fill="#dfe8f6"/><rect x="4" y="2" width="2" height="3" fill="#5b8fe4"/><rect x="2.5" y="9" width="11" height="6" fill="#e8eef0"/><rect x="3.5" y="10.5" width="9" height="1.5" fill="#58b048"/><rect x="3.5" y="12.5" width="9" height="1.5" fill="#58b048"/></svg>
<div style="left:33px;top:47px;width:1px;height:15px;background:#54575a"></div>
<svg style="left:42px;top:46px" width="16" height="16" viewBox="0 0 16 16"><path d="M0.8 8 L7 1.8 V5 H15.2 V11 H7 V14.2 Z" fill="#4cb6f4" stroke="#000" stroke-width="1.2" stroke-linejoin="round"/></svg>
<svg style="left:64px;top:53px" width="7" height="5" viewBox="0 0 7 5"><path d="M0 0 H7 L3.5 4 Z" fill="#c8c8c8"/></svg>
<svg style="left:78px;top:46px" width="16" height="16" viewBox="0 0 16 16"><path d="M15.2 8 L9 1.8 V5 H0.8 V11 H9 V14.2 Z" fill="#9c9c9c"/></svg>
<svg style="left:100px;top:53px" width="7" height="5" viewBox="0 0 7 5"><path d="M0 0 H7 L3.5 4 Z" fill="#c8c8c8"/></svg>
<div style="left:117px;top:47px;width:1px;height:15px;background:#54575a"></div>
<svg style="left:126px;top:45px" width="16" height="16" viewBox="0 0 16 16"><path d="M0.5 0.5 H8 L10 2.5 V15.5 H0.5 Z" fill="#a2a2a2" stroke="#8e8e8e" stroke-width="0.7"/><path d="M2 4 H5 M2 8 H4" stroke="#8a8a8a" stroke-width="0.8"/><path d="M3 11 L5.5 12.5 L12 15.5" stroke="#8e8e8e" stroke-width="0.8" fill="none"/><path d="M8 1.5 H13 V8.5 H16 L10.5 14.5 L5 8.5 H8 Z" fill="#a8a8a8" stroke="#888" stroke-width="0.6"/></svg>
<svg style="left:148px;top:45px" width="16" height="16" viewBox="0 0 16 16"><path d="M0.5 0.5 H8 L10 2.5 V15.5 H0.5 Z" fill="#a2a2a2" stroke="#8e8e8e" stroke-width="0.7"/><path d="M2 4 H5 M2 8 H4" stroke="#8a8a8a" stroke-width="0.8"/><path d="M3 11 L5.5 12.5 L12 15.5" stroke="#8e8e8e" stroke-width="0.8" fill="none"/><path d="M10.5 2.5 L16 8.5 H13 V15.5 H8 V8.5 H5 Z" fill="#a8a8a8" stroke="#888" stroke-width="0.6"/></svg>
<svg style="left:170px;top:45px" width="16" height="16" viewBox="0 0 16 16"><path d="M0.5 0.5 H8 L10 2.5 V15.5 H0.5 Z" fill="#a2a2a2" stroke="#8e8e8e" stroke-width="0.7"/><path d="M2 4 H5 M2 8 H4" stroke="#8a8a8a" stroke-width="0.8"/><path d="M3 11 L5.5 12.5 L12 15.5" stroke="#8e8e8e" stroke-width="0.8" fill="none"/><path d="M8 1.5 H13 V8.5 H16 L10.5 14.5 L5 8.5 H8 Z" fill="#a8a8a8" stroke="#888" stroke-width="0.6"/></svg>
<svg style="left:192px;top:45px" width="16" height="16" viewBox="0 0 16 16"><path d="M0.5 0.5 H8 L10 2.5 V15.5 H0.5 Z" fill="#a2a2a2" stroke="#8e8e8e" stroke-width="0.7"/><path d="M2 4 H5 M2 8 H4" stroke="#8a8a8a" stroke-width="0.8"/><path d="M3 11 L5.5 12.5 L12 15.5" stroke="#8e8e8e" stroke-width="0.8" fill="none"/><path d="M10.5 2.5 L16 8.5 H13 V15.5 H8 V8.5 H5 Z" fill="#a8a8a8" stroke="#888" stroke-width="0.6"/></svg>
<svg style="left:214px;top:46px" width="16" height="16" viewBox="0 0 16 16"><rect x="0.5" y="0.5" width="11.5" height="15" fill="#58e048" stroke="#000" stroke-width="1"/><rect x="1" y="5.5" width="10.5" height="2" fill="#f4f4f4"/><rect x="1" y="10.5" width="10.5" height="1.5" fill="#f4f4f4"/><circle cx="3" cy="3" r="0.8" fill="#a04010"/><circle cx="3" cy="9" r="0.8" fill="#a04010"/><circle cx="11" cy="10.5" r="4.6" fill="#3a3a3a" stroke="#ececec" stroke-width="1.6"/><rect x="9.2" y="8.7" width="3.6" height="3.6" fill="#0a0a0a"/></svg>
<svg style="left:249px;top:46px" width="16" height="16" viewBox="0 0 16 16"><path d="M4.5 0.8 H8.5 V9 H12.2 L6.5 15.2 L0.8 9 H4.5 Z" fill="#4cb6f4" stroke="#000" stroke-width="0.9" stroke-linejoin="round"/></svg>
<svg style="left:270px;top:46px" width="16" height="16" viewBox="0 0 16 16"><circle cx="8" cy="8" r="6.8" fill="#8a2a2a"/><circle cx="8" cy="8" r="4.6" fill="none" stroke="#b04040" stroke-width="1.4"/><path d="M4.5 11.5 L11.5 4.5" stroke="#b04040" stroke-width="1.8"/></svg>
<svg style="left:292px;top:45px" width="17" height="17" viewBox="0 0 16 16"><text x="8" y="14" text-anchor="middle" font-family="Liberation Serif" font-weight="bold" font-size="16" fill="#4cb6f4" stroke="#000" stroke-width="1" paint-order="stroke">I</text></svg>
<svg style="left:314px;top:45px" width="17" height="17" viewBox="0 0 16 16"><text x="8" y="14" text-anchor="middle" font-family="Liberation Serif" font-weight="bold" font-size="16" fill="#4cb6f4" stroke="#000" stroke-width="1" paint-order="stroke">D</text></svg>
<svg style="left:336px;top:45px" width="17" height="17" viewBox="0 0 16 16"><text x="8" y="14" text-anchor="middle" font-family="Liberation Serif" font-weight="bold" font-size="16" fill="#4cb6f4" stroke="#000" stroke-width="1" paint-order="stroke">U</text></svg>
<svg style="left:358px;top:45px" width="17" height="17" viewBox="0 0 16 16"><text x="8" y="14" text-anchor="middle" font-family="Liberation Serif" font-weight="bold" font-size="16" fill="#4cb6f4" stroke="#000" stroke-width="1" paint-order="stroke">L</text></svg>
<svg style="left:380px;top:45px" width="17" height="17" viewBox="0 0 16 16"><text x="8" y="14" text-anchor="middle" font-family="Liberation Serif" font-weight="bold" font-size="16" fill="#4cb6f4" stroke="#000" stroke-width="1" paint-order="stroke">F</text></svg>
<svg style="left:402px;top:45px" width="17" height="17" viewBox="0 0 16 16"><text x="8" y="14" text-anchor="middle" font-family="Liberation Serif" font-weight="bold" font-size="16" fill="#4cb6f4" stroke="#000" stroke-width="1" paint-order="stroke">V</text></svg>
<svg style="left:424px;top:45px" width="17" height="17" viewBox="0 0 16 16"><text x="8" y="14" text-anchor="middle" font-family="Liberation Serif" font-weight="bold" font-size="16" fill="#4cb6f4" stroke="#000" stroke-width="1" paint-order="stroke">B</text></svg>
<svg style="left:446px;top:53px" width="7" height="5" viewBox="0 0 7 5"><path d="M0 0 H7 L3.5 4 Z" fill="#c8c8c8"/></svg>
<div style="left:463px;top:47px;width:1px;height:15px;background:#54575a"></div>
<svg style="left:472px;top:46px" width="16" height="16" viewBox="0 0 16 16"><path d="M7 1 L15 5 L9 9 Z" fill="#a0a0a0"/><path d="M9 7 L1 11 L7 15 Z" fill="#a0a0a0"/></svg>
<svg style="left:494px;top:46px" width="16" height="16" viewBox="0 0 16 16"><path d="M6 4 H12 L15 7 V15.5 H6 Z" fill="#a4a4a4"/><path d="M1 4 L3.5 7 L8 1" fill="none" stroke="#a8a8a8" stroke-width="2"/><path d="M1 9 H6 V7 L10 11 L6 15 V13 H1 Z" fill="#b4b4b4"/></svg>
<div style="left:519px;top:47px;width:1px;height:15px;background:#54575a"></div>
<svg style="left:527px;top:46px" width="16" height="16" viewBox="0 0 16 16"><path d="M2 7 L7 2.5 V5 C12 5 15 7.5 14 13.5 C12.5 9.5 10 8.8 7 9 V11.5 Z" fill="#3cb82c" stroke="#1a7a14" stroke-width="0.7"/></svg>
<svg style="left:550px;top:53px" width="7" height="5" viewBox="0 0 7 5"><path d="M0 0 H7 L3.5 4 Z" fill="#c8c8c8"/></svg>
<svg style="left:564px;top:46px" width="16" height="16" viewBox="0 0 16 16"><path d="M14 7 L9 2.5 V5 C4 5 1 7.5 2 13.5 C3.5 9.5 6 8.8 9 9 V11.5 Z" fill="#8e8e8e"/></svg>
<svg style="left:587px;top:53px" width="7" height="5" viewBox="0 0 7 5"><path d="M0 0 H7 L3.5 4 Z" fill="#c8c8c8"/></svg>
<div style="left:603px;top:47px;width:1px;height:15px;background:#54575a"></div>
<svg style="left:612px;top:46px" width="16" height="16" viewBox="0 0 16 16"><path d="M1.5 9 L4.5 14 L15 2" fill="none" stroke="#8a2be8" stroke-width="2.8" stroke-linecap="round"/></svg>
<svg style="left:635px;top:46px" width="16" height="16" viewBox="0 0 16 16"><path d="M0.5 0.5 H11 L15.5 5 V15.5 H0.5 Z" fill="#fafafa" stroke="#000"/><text x="2" y="7.5" font-family="Liberation Sans" font-weight="bold" font-size="7.5" fill="#000">10</text><text x="2" y="14" font-family="Liberation Sans" font-weight="bold" font-size="7.5" fill="#000">01</text></svg>
<svg style="left:656px;top:46px" width="16" height="16" viewBox="0 0 16 16"><path d="M1.5 4 L4.5 1 L10 6.5 L12.5 4 L14.5 14.5 L4 12.5 L6.5 10 Z" fill="#30b040" stroke="#0e5a1c" stroke-width="1"/></svg>
<svg style="left:678px;top:46px" width="16" height="16" viewBox="0 0 16 16"><rect x="0.5" y="2.5" width="15" height="11" fill="#d8d8d8"/><rect x="0.5" y="2.5" width="3" height="11" fill="#e8e8e8"/><circle cx="2" cy="4" r="0.7" fill="#000"/><circle cx="2" cy="7" r="0.7" fill="#000"/><circle cx="2" cy="10" r="0.7" fill="#000"/><circle cx="2" cy="12.5" r="0.7" fill="#000"/><rect x="4.5" y="4" width="9" height="4" fill="#4a78a8"/><rect x="4.5" y="9" width="9" height="3.5" fill="#90c8a0"/></svg>
<svg style="left:700px;top:46px" width="16" height="16" viewBox="0 0 16 16"><path d="M0.5 3.5 H6 L7.5 1.5 H13 V5 H15.5 V14.5 H0.5 Z" fill="#e8d060" stroke="#8a7010" stroke-width="0.8"/><rect x="0.5" y="5.5" width="15" height="9" fill="#d8b838" stroke="#8a7010" stroke-width="0.8"/><text x="8" y="13.3" text-anchor="middle" font-family="Liberation Sans" font-weight="bold" font-size="8" fill="#000">DT</text></svg>
<svg style="left:722px;top:46px" width="16" height="16" viewBox="0 0 16 16"><path d="M10.5 3.5 C9.5 1.8 7.8 1.2 6 1.2 C3 1.2 1 3.5 1 7 C1 10.5 3 12.5 6 12.5 C7.8 12.5 9.3 11.8 10.5 10" fill="none" stroke="#3a8ef8" stroke-width="2.6"/><text x="9.5" y="15.5" font-family="Liberation Serif" font-style="italic" font-weight="bold" font-size="11" fill="#e020e0">f</text></svg>
<svg style="left:744px;top:46px" width="16" height="16" viewBox="0 0 16 16"><rect x="6" y="0.5" width="4.5" height="4.5" fill="#80b0f0" stroke="#5080c0" stroke-width="0.5"/><path d="M8.2 5 V8 M2.5 8 H14 M2.5 8 V10 M8.2 8 V10 M14 8 V10" stroke="#c8c8c8" stroke-width="1"/><rect x="0.5" y="10.5" width="4.5" height="4.5" fill="#50b848"/><rect x="6" y="10.5" width="4.5" height="4.5" fill="#50b848"/><rect x="11.5" y="10.5" width="4.5" height="4.5" fill="#50b848"/></svg>
<svg style="left:766px;top:46px" width="16" height="16" viewBox="0 0 16 16"><circle cx="8" cy="8" r="7.3" fill="#14a838" stroke="#0a7020" stroke-width="0.6"/><path d="M6 4 L12 8 L6 12 Z" fill="#fff"/></svg>
<svg style="left:788px;top:46px" width="16" height="16" viewBox="0 0 16 16"><rect x="0.5" y="1.5" width="15" height="11" fill="#1a1a1a" stroke="#000"/><rect x="1.5" y="2.5" width="13" height="9" fill="#20c040"/><rect x="3.5" y="3.5" width="3" height="7" fill="#111"/><rect x="9.5" y="3.5" width="3" height="7" fill="#111"/><path d="M2 13 V15.5 M4 13 V15.5 M6 13 V15.5 M8 13 V15.5 M10 13 V15.5 M12 13 V15.5 M14 13 V15.5" stroke="#e0e0e0" stroke-width="1"/></svg>
<svg style="left:810px;top:46px" width="16" height="16" viewBox="0 0 16 16"><path d="M8 0.8 L15.2 8 L8 15.2 L0.8 8 Z" fill="#f08010" stroke="#2030a0" stroke-width="1.3"/></svg>
<svg style="left:832px;top:46px" width="16" height="16" viewBox="0 0 16 16"><rect x="0.5" y="0.5" width="15" height="15" fill="#f4f8ff" stroke="#4f88d8"/><rect x="2" y="2" width="12" height="1.5" fill="#40a840"/><path d="M2 6 H14 M2 9 H14 M2 12 H14 M5 4 V14" stroke="#9ab8e0" stroke-width="1"/></svg>
<svg style="left:854px;top:46px" width="16" height="16" viewBox="0 0 16 16"><rect x="0.5" y="0.5" width="15" height="15" fill="#f4f8ff" stroke="#4f88d8"/><rect x="2" y="2" width="12" height="1.5" fill="#40a840"/><path d="M2 6 H14 M2 9 H14 M2 12 H14 M5 4 V14" stroke="#9ab8e0" stroke-width="1"/><path d="M6 9 H10 V6.5 L15.5 11 L10 15.5 V13 H6 Z" fill="#50a040" stroke="#2a7020" stroke-width="0.8"/></svg>
<svg style="left:876px;top:46px" width="16" height="16" viewBox="0 0 16 16"><path d="M6 0.5 H9.5 L11 2 V6 H6 Z" fill="#f4f4f4"/><path d="M8.5 6 V8 M2.5 8 H14 M2.5 8 V9.5 M8.5 8 V9.5 M14 8 V9.5" stroke="#c0c0c0" stroke-width="0.8"/><rect x="0.5" y="10" width="4.5" height="5.5" fill="#f4f4f4"/><rect x="6" y="10" width="4.5" height="5.5" fill="#f4f4f4"/><rect x="11.5" y="10" width="4.5" height="5.5" fill="#f4f4f4"/><rect x="1.5" y="12" width="2.5" height="2.5" fill="#4a90e0"/><rect x="7" y="12" width="2.5" height="2.5" fill="#f08030"/><rect x="12.5" y="12" width="2.5" height="2.5" fill="#40c040"/></svg>
<div style="left:901px;top:47px;width:1px;height:15px;background:#54575a"></div>
<svg style="left:910px;top:46px" width="16" height="16" viewBox="0 0 16 16"><circle cx="7" cy="6.5" r="6" fill="#8a8a8a"/><path d="M5.5 3.5 L10 6.5 L5.5 9.5 Z" fill="#b0b0b0"/><path d="M12 7 H14.5 V14 H6 V12" fill="none" stroke="#7a7a7a" stroke-width="1.5"/></svg>
<svg style="left:114px;top:77px" width="16" height="16" viewBox="0 0 16 16"><rect x="0.5" y="0.5" width="13" height="13" fill="#f4f8ff" stroke="#4f88d8"/><rect x="2" y="2" width="10" height="2" fill="#9ab8e0"/><rect x="2.5" y="6" width="2" height="5" fill="#4f88d8"/><circle cx="12" cy="12" r="3.8" fill="#40b040" stroke="#e8f8e8" stroke-width="0.8"/><path d="M10 12 H14 M12 10 V14" stroke="#fff" stroke-width="1.2"/></svg>
<svg style="left:135px;top:77px" width="16" height="16" viewBox="0 0 16 16"><path d="M0.5 2.5 H5.5 L7 4 H13 V7 H15.5 L12.5 13.5 H0.5 Z" fill="#e8d060" stroke="#8a7010" stroke-width="0.8"/><path d="M0.5 13.5 L3.5 7 H15.5 L12.5 13.5 Z" fill="#f8e070" stroke="#8a7010" stroke-width="0.8"/></svg>
<svg style="left:157px;top:77px" width="16" height="16" viewBox="0 0 16 16"><path d="M2 1 H9 C11 1 11 4 11 6 M8 4 L11 7.5 L14 4" fill="none" stroke="#10e010" stroke-width="1.8"/><rect x="1" y="7" width="14" height="8" fill="#f0f0f0" stroke="#d8d8d8" stroke-width="0.5"/><rect x="1" y="7" width="14" height="1.2" fill="#2a90f0"/><path d="M3 10.5 H13 M3 12.5 H13 M8 9 V14" stroke="#c8c8c8" stroke-width="0.8"/></svg>
<div style="left:177px;top:77px;width:1px;height:17px;background:#5a5d60"></div>
<svg style="left:183px;top:80px" width="11" height="11" viewBox="0 0 11 11"><path d="M1.5 1.5 L9.5 9.5 M9.5 1.5 L1.5 9.5" stroke="#a8a8a8" stroke-width="2.2"/></svg>
<svg style="left:5px;top:385px" width="16" height="16" viewBox="0 0 16 16"><path d="M6 0.5 H9.5 L11 2 V6 H6 Z" fill="#f4f4f4"/><path d="M8.5 6 V8 M2.5 8 H14 M2.5 8 V9.5 M8.5 8 V9.5 M14 8 V9.5" stroke="#c0c0c0" stroke-width="0.8"/><rect x="0.5" y="10" width="4.5" height="5.5" fill="#f4f4f4"/><rect x="6" y="10" width="4.5" height="5.5" fill="#f4f4f4"/><rect x="11.5" y="10" width="4.5" height="5.5" fill="#f4f4f4"/><rect x="1.5" y="12" width="2.5" height="2.5" fill="#4a90e0"/><rect x="7" y="12" width="2.5" height="2.5" fill="#f08030"/><rect x="12.5" y="12" width="2.5" height="2.5" fill="#40c040"/></svg>
<svg style="left:135px;top:386px" width="16" height="16" viewBox="0 0 16 16"><rect x="0.5" y="5" width="12" height="10.5" fill="#8a8a8a"/><path d="M5 12 L6 9 L13 2 L15 4 L8 11 Z" fill="#a0a0a0" stroke="#7a7a7a" stroke-width="0.6"/></svg>
<svg style="left:157px;top:385px" width="16" height="16" viewBox="0 0 16 16"><path d="M2 1 H9 C11 1 11 4 11 6 M8 4 L11 7.5 L14 4" fill="none" stroke="#10e010" stroke-width="1.8"/><rect x="1" y="7" width="14" height="8" fill="#f0f0f0" stroke="#d8d8d8" stroke-width="0.5"/><rect x="1" y="7" width="14" height="1.2" fill="#2a90f0"/><path d="M3 10.5 H13 M3 12.5 H13 M8 9 V14" stroke="#c8c8c8" stroke-width="0.8"/></svg>
<div style="left:177px;top:385px;width:1px;height:17px;background:#5a5d60"></div>
<svg style="left:183px;top:388px" width="11" height="11" viewBox="0 0 11 11"><path d="M1.5 1.5 L9.5 9.5 M9.5 1.5 L1.5 9.5" stroke="#a8a8a8" stroke-width="2.2"/></svg>
<svg style="left:4px;top:689px" width="16" height="16" viewBox="0 0 16 16"><path d="M0.5 3.5 H6 L7.5 1.5 H13 V5 H15.5 V14.5 H0.5 Z" fill="#e8d060" stroke="#8a7010" stroke-width="0.8"/><rect x="0.5" y="5.5" width="15" height="9" fill="#d8b838" stroke="#8a7010" stroke-width="0.8"/><text x="8" y="13.3" text-anchor="middle" font-family="Liberation Sans" font-weight="bold" font-size="8" fill="#000">DT</text></svg>
<div style="left:155px;top:689px;width:1px;height:18px;background:#5a5d60"></div>
<svg style="left:162px;top:695px" width="10" height="5" viewBox="0 0 10 5"><path d="M0 0 H10 L5.0 4 Z" fill="#c0c0c0"/></svg>
<svg style="left:183px;top:692px" width="11" height="11" viewBox="0 0 11 11"><path d="M1.5 1.5 L9.5 9.5 M9.5 1.5 L1.5 9.5" stroke="#a8a8a8" stroke-width="2.2"/></svg>
<svg style="left:6px;top:714px" width="16" height="16" viewBox="0 0 16 16"><path d="M0.8 8 L7 1.8 V5 H15.2 V11 H7 V14.2 Z" fill="#9c9c9c"/></svg>
<svg style="left:29px;top:720px" width="7" height="5" viewBox="0 0 7 5"><path d="M0 0 H7 L3.5 4 Z" fill="#c8c8c8"/></svg>
<svg style="left:42px;top:714px" width="16" height="16" viewBox="0 0 16 16"><path d="M15.2 8 L9 1.8 V5 H0.8 V11 H9 V14.2 Z" fill="#9c9c9c"/></svg>
<svg style="left:67px;top:720px" width="7" height="5" viewBox="0 0 7 5"><path d="M0 0 H7 L3.5 4 Z" fill="#c8c8c8"/></svg>
<div style="left:81px;top:712px;width:1px;height:20px;background:#54575a"></div>
<svg style="left:90px;top:714px" width="16" height="16" viewBox="0 0 16 16"><circle cx="2.5" cy="3" r="1.8" fill="#2040e0"/><rect x="10" y="1" width="3" height="3" transform="rotate(45 11.5 2.5)" fill="#111"/><path d="M4 4 L7 7 V12 H11" fill="none" stroke="#f09020" stroke-width="1.3"/><rect x="10" y="10" width="3" height="3" transform="rotate(45 11.5 11.5)" fill="#30b030"/></svg>
<svg style="left:113px;top:720px" width="7" height="5" viewBox="0 0 7 5"><path d="M0 0 H7 L3.5 4 Z" fill="#c8c8c8"/></svg>
<div style="left:129px;top:712px;width:1px;height:20px;background:#54575a"></div>
<div style="left:136px;top:712px;width:21px;height:21px;background:#3c3f41;border:1px solid #6e7174"></div>
<svg style="left:139px;top:715px" width="16" height="16" viewBox="0 0 16 16"><text x="3" y="12" font-family="Liberation Mono" font-size="11" fill="#111">[]</text><path d="M1 1 L15 15" stroke="#e02020" stroke-width="1.8"/></svg>
<div style="left:158px;top:712px;width:21px;height:21px;background:#3c3f41;border:1px solid #6e7174"></div>
<svg style="left:161px;top:715px" width="16" height="16" viewBox="0 0 16 16"><path d="M2 8 C2 4 5 3 8 4 L14 4 L14 7 L9 7 C11 9 10 13 6 13 C3 13 2 11 2 8 Z" fill="#f0a020" stroke="#603000" stroke-width="0.8"/><path d="M1 1 L15 15" stroke="#e02020" stroke-width="1.8"/></svg>
<div style="left:185px;top:712px;width:1px;height:20px;background:#54575a"></div>
<svg style="left:6px;top:737px" width="16" height="16" viewBox="0 0 16 16"><rect x="0.5" y="0.5" width="12" height="12" fill="#f0f4ff" stroke="#4f78c8"/><rect x="3" y="3" width="12.5" height="12.5" fill="#f8faff" stroke="#4f78c8"/><rect x="5" y="8.5" width="8" height="2" fill="#2a58a8"/></svg>
<svg style="left:1151px;top:77px" width="16" height="16" viewBox="0 0 16 16"><path d="M0.5 0.5 H6 L8.5 3 V11.5 H0.5 Z" fill="#f8f8f8"/><path d="M5.5 4.5 H11 L13.5 7 V15.5 H5.5 Z" fill="#f8f8f8" stroke="#3c3f41" stroke-width="0.8"/></svg>
<svg style="left:1172px;top:77px" width="16" height="16" viewBox="0 0 16 16"><path d="M0.5 1.5 H6 L8.5 4 V12.5 H0.5 Z" fill="#8e8e8e" rx="2"/><path d="M5.5 3.5 H11 L15.5 8 V15.5 H5.5 Z" fill="#9a9a9a" stroke="#7e7e7e" stroke-width="0.6"/></svg>
<div style="left:1198px;top:77px;width:1px;height:17px;background:#5a5d60"></div>
<div style="left:1205px;top:75px;width:22px;height:21px;background:#2b2d30;border:1px solid #6e7174;border-bottom:2px solid #8a8d90"></div>
<svg style="left:1208px;top:77px" width="16" height="16" viewBox="0 0 16 16"><path d="M2 1 V12 L4.8 9.6 L7 14.5 L8.8 13.6 L6.6 8.8 L10 8.5 Z" fill="#fff" stroke="#000" stroke-width="0.8"/><rect x="7" y="10" width="9" height="6" fill="#f0c040"/></svg>
<div style="left:1232px;top:77px;width:1px;height:17px;background:#5a5d60"></div>
<svg style="left:1241px;top:77px" width="16" height="16" viewBox="0 0 16 16"><rect x="0" y="1" width="16" height="2" fill="#f0f0f0"/><rect x="0" y="5" width="7" height="2" fill="#f0f0f0"/><rect x="8" y="5" width="4" height="2" fill="#f0b040"/><rect x="13" y="5" width="3" height="2" fill="#f0f0f0"/><rect x="0" y="9" width="16" height="2" fill="#f0f0f0"/><path d="M8 11 V15 M6 13 L8 15 L10 13" stroke="#505050" stroke-width="1.2" fill="none"/></svg>
<svg style="left:1263px;top:77px" width="16" height="16" viewBox="0 0 16 16"><rect x="0.5" y="0.5" width="5" height="15" fill="#e8f0f8" stroke="#3a78c8"/><rect x="10.5" y="0.5" width="5" height="15" fill="#e8f0f8" stroke="#3a78c8"/><path d="M4 12 L12 5" stroke="#40b040" stroke-width="2.2"/></svg>
<div style="left:1288px;top:77px;width:1px;height:17px;background:#5a5d60"></div>
<svg style="left:1297px;top:77px" width="16" height="16" viewBox="0 0 16 16"><rect x="0.5" y="4" width="15" height="11" rx="1.5" fill="#2a2a2a" stroke="#111"/><rect x="5" y="1" width="6" height="3.5" fill="#d8d8d8" stroke="#333" stroke-width="0.6"/><circle cx="8" cy="9.5" r="3.6" fill="#555" stroke="#ccc" stroke-width="1"/><circle cx="8" cy="9.5" r="1.5" fill="#111"/></svg>
<div style="left:1322px;top:77px;width:1px;height:17px;background:#5a5d60"></div>
<svg style="left:1331px;top:77px" width="16" height="16" viewBox="0 0 16 16"><rect x="0.5" y="0.5" width="10" height="15" fill="#f4f4f4" stroke="#d0d0d0" stroke-dasharray="1,1"/><path d="M2 3 H9 M2 5 H9" stroke="#aaa" stroke-width="0.8"/><rect x="2" y="8" width="7" height="4" fill="#5a88c8"/><rect x="11" y="0.5" width="4.5" height="15" fill="#e8a820" stroke="#b07810" stroke-width="0.6"/><path d="M12.5 3 H14 M12.5 5.5 H14 M12.5 8 H14 M12.5 10.5 H14 M12.5 13 H14" stroke="#fff0a0" stroke-width="0.8"/></svg>
<svg style="left:1353px;top:83px" width="7" height="5" viewBox="0 0 7 5"><path d="M0 0 H7 L3.5 4 Z" fill="#c8c8c8"/></svg>
<div style="left:1365px;top:77px;width:1px;height:17px;background:#5a5d60"></div>
<svg style="left:1371px;top:79px" width="11" height="11" viewBox="0 0 11 11"><path d="M1.5 1.5 L9.5 9.5 M9.5 1.5 L1.5 9.5" stroke="#a8a8a8" stroke-width="2.2"/></svg>
<svg style="left:1706px;top:77px" width="16" height="16" viewBox="0 0 16 16"><path d="M13 6 A5.5 5.5 0 0 0 3 5 L1 3 V9 H7 L5 7 A3 3 0 0 1 10.5 6.5 Z" fill="#30c030" stroke="#107010" stroke-width="0.6"/><path d="M3 10 A5.5 5.5 0 0 0 13 11 L15 13 V7 H9 L11 9 A3 3 0 0 1 5.5 9.5 Z" fill="#30c030" stroke="#107010" stroke-width="0.6"/></svg>
<svg style="left:1728px;top:77px" width="16" height="16" viewBox="0 0 16 16"><rect x="6" y="0.5" width="4" height="4" fill="#80b0f0"/><path d="M8 4.5 V8 M2.5 8 H8 M2.5 8 V10 M8 8 V10" stroke="#c8c8c8" stroke-width="1"/><rect x="0.5" y="11" width="4" height="4" fill="#50b848"/><rect x="6" y="11" width="4" height="4" fill="#50b848"/><rect x="12" y="12" width="3.5" height="3.5" fill="#e03030"/></svg>
<div class="ui" style="left:1749px;top:77px;font-size:14px;letter-spacing:-0.6px;line-height:16px;color:#3a8ef8">Ro</div>
<div style="left:1775px;top:77px;width:1px;height:17px;background:#5a5d60"></div>
<svg style="left:1784px;top:77px" width="16" height="16" viewBox="0 0 16 16"><path d="M0.5 0.5 H6 L8.5 3 V11.5 H0.5 Z" fill="#f8f8f8"/><path d="M5.5 4.5 H11 L13.5 7 V15.5 H5.5 Z" fill="#f8f8f8" stroke="#3c3f41" stroke-width="0.8"/></svg>
<div style="left:1809px;top:77px;width:1px;height:17px;background:#5a5d60"></div>
<svg style="left:1818px;top:77px" width="16" height="16" viewBox="0 0 16 16"><rect x="0.5" y="0.5" width="13" height="15" fill="#cfe0f8" stroke="#3a78d8"/><path d="M3 13 L4 10 L12 2 L14.5 4.5 L6.5 12.5 Z" fill="#f0c040" stroke="#a07010" stroke-width="0.7"/><rect x="2" y="13.5" width="10" height="1.2" fill="#5a90d8"/></svg>
<div style="left:1843px;top:77px;width:1px;height:17px;background:#5a5d60"></div>
<svg style="left:1852px;top:77px" width="16" height="16" viewBox="0 0 16 16"><rect x="0.5" y="4" width="15" height="11" rx="1.5" fill="#2a2a2a" stroke="#111"/><rect x="5" y="1" width="6" height="3.5" fill="#d8d8d8" stroke="#333" stroke-width="0.6"/><circle cx="8" cy="9.5" r="3.6" fill="#555" stroke="#ccc" stroke-width="1"/><circle cx="8" cy="9.5" r="1.5" fill="#111"/></svg>
<div style="left:1872px;top:77px;width:1px;height:17px;background:#5a5d60"></div>
<svg style="left:1879px;top:83px" width="10" height="5" viewBox="0 0 10 5"><path d="M0 0 H10 L5.0 4 Z" fill="#b8b8b8"/></svg>
<svg style="left:1900px;top:79px" width="11" height="11" viewBox="0 0 11 11"><path d="M1.5 1.5 L9.5 9.5 M9.5 1.5 L1.5 9.5" stroke="#a8a8a8" stroke-width="2.2"/></svg>
<svg style="left:213px;top:77px" width="16" height="16" viewBox="0 0 16 16"><rect x="0.5" y="2.5" width="15" height="11" fill="#d8d8d8"/><rect x="0.5" y="2.5" width="3" height="11" fill="#e8e8e8"/><circle cx="2" cy="4" r="0.7" fill="#000"/><circle cx="2" cy="7" r="0.7" fill="#000"/><circle cx="2" cy="10" r="0.7" fill="#000"/><circle cx="2" cy="12.5" r="0.7" fill="#000"/><rect x="4.5" y="4" width="9" height="4" fill="#4a78a8"/><rect x="4.5" y="9" width="9" height="3.5" fill="#90c8a0"/></svg>
<svg style="left:1401px;top:77px" width="16" height="16" viewBox="0 0 16 16"><path d="M10.5 3.5 C9.5 1.8 7.8 1.2 6 1.2 C3 1.2 1 3.5 1 7 C1 10.5 3 12.5 6 12.5 C7.8 12.5 9.3 11.8 10.5 10" fill="none" stroke="#3a8ef8" stroke-width="2.6"/><text x="9.5" y="15.5" font-family="Liberation Serif" font-style="italic" font-weight="bold" font-size="11" fill="#e020e0">f</text></svg>
<svg style="left:213px;top:828px" width="14" height="15" viewBox="0 0 16 16"><rect x="0.5" y="0.5" width="15" height="11" fill="#e8e8e8" stroke="#c8c8c8"/><rect x="2" y="2" width="12" height="8" fill="#4f88d8"/><rect x="6.5" y="12" width="3" height="2" fill="#e8e8e8"/><rect x="4" y="14" width="8" height="1.5" fill="#e8e8e8"/></svg>
<svg style="left:1852px;top:828px" width="16" height="16" viewBox="0 0 16 16"><path d="M4 7 V5 A4 4 0 0 1 12 5 V7" fill="none" stroke="#e8e8e8" stroke-width="1.5"/><rect x="1" y="7" width="14" height="8.5" fill="#f0a020"/><rect x="1" y="9.5" width="14" height="2.5" fill="#fff0c0"/></svg>
<svg style="left:1875px;top:828px" width="16" height="16" viewBox="0 0 16 16"><path d="M3 11 L4 8 L11 1 L14 4 L7 11 Z" fill="#f0c020" stroke="#806000" stroke-width="0.6"/><path d="M1 13 H13 M2 15 H12" stroke="#b0b0b0" stroke-width="1" stroke-dasharray="2,1"/></svg>
<div style="left:1893px;top:829px;width:1px;height:16px;background:#5a5d60"></div>
<svg style="left:1900px;top:829px" width="11" height="11" viewBox="0 0 11 11"><path d="M1.5 1.5 L9.5 9.5 M9.5 1.5 L1.5 9.5" stroke="#a8a8a8" stroke-width="2.2"/></svg>
<svg style="left:7px;top:102px" width="10" height="7" viewBox="0 0 10 7"><path d="M1 1 L5 5 L9 1" fill="none" stroke="#c0c0c0" stroke-width="1.2"/></svg>
<svg style="left:25px;top:99px" width="22" height="16" viewBox="0 0 22 16"><path d="M0.5 3.5 H5 L6.5 2 H11 V5 H0.5 Z" fill="#e8d060" stroke="#7a6010" stroke-width="0.7"/><path d="M0.5 14.5 L3 6 H14 L11.5 14.5 Z" fill="#f0d868" stroke="#7a6010" stroke-width="0.7"/><rect x="0.5" y="5" width="3" height="9.5" fill="#e0c050"/><path d="M12 14 L16 3" stroke="#b08020" stroke-width="1.5"/><path d="M15.5 3.5 L21 2 L14 8 Z" fill="#e02020"/></svg>
<div class="ui" style="left:53px;top:98px;font-size:12px;letter-spacing:-0.5px;color:#c8c8c8">lk_a_noOrangeState.bin</div>
<svg style="left:44px;top:119px" width="14" height="14" viewBox="0 0 14 14"><path d="M0.5 0.5 H10 L13.5 4 V13.5 H0.5 Z" fill="#f4f4f4" stroke="#222" stroke-width="0.6"/><path d="M2 3 H7 M2 6 H11 M2 9 H9 M2 11.5 H11" stroke="#9a9a9a" stroke-width="1"/><path d="M2 3 H4 M8 6 H10 M4 11.5 H6" stroke="#c04030" stroke-width="1"/></svg>
<div class="ui" style="left:71px;top:116px;font-size:12px;letter-spacing:-0.5px;color:#c8c8c8">ram</div>
<svg style="left:95px;top:352px" width="8" height="8" viewBox="0 0 8 8"><path d="M1 1 L7 7 M7 1 L1 7" stroke="#c8c8c8" stroke-width="1.3"/></svg>
<svg style="left:9px;top:410px" width="7" height="10" viewBox="0 0 7 10"><path d="M1 1 L5 5 L1 9" fill="none" stroke="#b8b8b8" stroke-width="1.2"/></svg>
<svg style="left:25px;top:407px" width="22" height="16" viewBox="0 0 22 16"><path d="M0.5 2.5 H5 L6.5 1 H11 V4 H0.5 Z" fill="#e8d060" stroke="#7a6010" stroke-width="0.7"/><rect x="0.5" y="4" width="14" height="9.5" fill="#f0d868" stroke="#7a6010" stroke-width="0.7"/><path d="M15 14 L18 9 L21 14 Z" fill="#30a040"/></svg>
<div class="ui" style="left:52px;top:406px;font-size:12px;letter-spacing:-0.5px;color:#c8c8c8">Imports</div>
<svg style="left:9px;top:429px" width="7" height="10" viewBox="0 0 7 10"><path d="M1 1 L5 5 L1 9" fill="none" stroke="#b8b8b8" stroke-width="1.2"/></svg>
<svg style="left:25px;top:426px" width="22" height="16" viewBox="0 0 22 16"><path d="M0.5 2.5 H5 L6.5 1 H11 V4 H0.5 Z" fill="#e8d060" stroke="#7a6010" stroke-width="0.7"/><rect x="0.5" y="4" width="14" height="9.5" fill="#f0d868" stroke="#7a6010" stroke-width="0.7"/></svg>
<div class="ui" style="left:52px;top:425px;font-size:12px;letter-spacing:-0.5px;color:#c8c8c8">Exports</div>
<svg style="left:9px;top:448px" width="7" height="10" viewBox="0 0 7 10"><path d="M1 1 L5 5 L1 9" fill="none" stroke="#b8b8b8" stroke-width="1.2"/></svg>
<svg style="left:25px;top:445px" width="22" height="16" viewBox="0 0 22 16"><path d="M0.5 2.5 H5 L6.5 1 H11 V4 H0.5 Z" fill="#e8d060" stroke="#7a6010" stroke-width="0.7"/><rect x="0.5" y="4" width="14" height="9.5" fill="#f0d868" stroke="#7a6010" stroke-width="0.7"/><rect x="13" y="5" width="8" height="10" fill="#f4f4f4" stroke="#aaa" stroke-width="0.5"/><text x="14.5" y="12" font-family="Liberation Serif" font-style="italic" font-weight="bold" font-size="9" fill="#e02020">f</text></svg>
<div class="ui" style="left:52px;top:444px;font-size:12px;letter-spacing:-0.5px;color:#c8c8c8">Functions</div>
<svg style="left:9px;top:467px" width="7" height="10" viewBox="0 0 7 10"><path d="M1 1 L5 5 L1 9" fill="none" stroke="#b8b8b8" stroke-width="1.2"/></svg>
<svg style="left:25px;top:464px" width="22" height="16" viewBox="0 0 22 16"><path d="M0.5 2.5 H5 L6.5 1 H11 V4 H0.5 Z" fill="#e8d060" stroke="#7a6010" stroke-width="0.7"/><rect x="0.5" y="4" width="14" height="9.5" fill="#f0d868" stroke="#7a6010" stroke-width="0.7"/><circle cx="17.5" cy="11" r="3.8" fill="#30a040" stroke="#60d060" stroke-width="0.5"/></svg>
<div class="ui" style="left:52px;top:463px;font-size:12px;letter-spacing:-0.5px;color:#c8c8c8">Labels</div>
<svg style="left:9px;top:486px" width="7" height="10" viewBox="0 0 7 10"><path d="M1 1 L5 5 L1 9" fill="none" stroke="#b8b8b8" stroke-width="1.2"/></svg>
<svg style="left:25px;top:483px" width="22" height="16" viewBox="0 0 22 16"><path d="M0.5 2.5 H5 L6.5 1 H11 V4 H0.5 Z" fill="#e8d060" stroke="#7a6010" stroke-width="0.7"/><rect x="0.5" y="4" width="14" height="9.5" fill="#f0d868" stroke="#7a6010" stroke-width="0.7"/><circle cx="17" cy="11" r="5" fill="#30a040" stroke="#70c070" stroke-width="0.8"/><text x="17" y="14" text-anchor="middle" font-family="Liberation Sans" font-weight="bold" font-size="8" fill="#fff">C</text></svg>
<div class="ui" style="left:52px;top:482px;font-size:12px;letter-spacing:-0.5px;color:#c8c8c8">Classes</div>
<svg style="left:9px;top:505px" width="7" height="10" viewBox="0 0 7 10"><path d="M1 1 L5 5 L1 9" fill="none" stroke="#b8b8b8" stroke-width="1.2"/></svg>
<svg style="left:25px;top:502px" width="22" height="16" viewBox="0 0 22 16"><path d="M0.5 2.5 H5 L6.5 1 H11 V4 H0.5 Z" fill="#e8d060" stroke="#7a6010" stroke-width="0.7"/><rect x="0.5" y="4" width="14" height="9.5" fill="#f0d868" stroke="#7a6010" stroke-width="0.7"/><text x="14" y="15" font-family="Liberation Mono" font-size="9" fill="#111">{}</text></svg>
<div class="ui" style="left:52px;top:501px;font-size:12px;letter-spacing:-0.5px;color:#c8c8c8">Namespaces</div>
<svg style="left:180px;top:655px" width="16" height="16" viewBox="0 0 16 16"><path d="M3 0.5 H11 L15 4.5 V15.5 H3 Z" fill="#dce8f8" stroke="#4a88d8"/><path d="M1 8 L5 5 V11 Z M6 5 L10 8 L6 11" fill="#3a80e0"/><rect x="5" y="12.5" width="8" height="1.5" fill="#4a88d8"/></svg>
<svg style="left:180px;top:1001px" width="16" height="16" viewBox="0 0 16 16"><path d="M3 0.5 H11 L15 4.5 V15.5 H3 Z" fill="#dce8f8" stroke="#4a88d8"/><path d="M1 8 L5 5 V11 Z M6 5 L10 8 L6 11" fill="#3a80e0"/><rect x="5" y="12.5" width="8" height="1.5" fill="#4a88d8"/></svg>
<svg style="left:6px;top:758px" width="24" height="17" viewBox="0 0 24 17"><rect x="5" y="2" width="3" height="11" fill="#e08020"/><rect x="12" y="3" width="2.5" height="10" fill="#3050d0"/><rect x="14.5" y="2" width="2.5" height="11" fill="#30a040"/><rect x="17" y="3" width="2.5" height="10" fill="#50c060"/><rect x="0" y="13" width="24" height="2" fill="#8a3010"/><path d="M3 15 V17 M21 15 V17" stroke="#8a3010" stroke-width="1.5"/></svg>
<div class="ui" style="left:32px;top:758px;font-size:12px;letter-spacing:-0.5px;color:#c8c8c8">Data Types</div>
<svg style="left:9px;top:782px" width="7" height="10" viewBox="0 0 7 10"><path d="M1 1 L5 5 L1 9" fill="none" stroke="#b8b8b8" stroke-width="1.2"/></svg>
<svg style="left:26px;top:778px" width="12" height="16" viewBox="0 0 12 16"><path d="M1 3 L9 1 V13 L1 15 Z" fill="#e08020" stroke="#804010" stroke-width="0.6"/><path d="M9 1 L11 2 V14 L9 13" fill="#f4e8c0"/><path d="M3 6 L7 5 M3 9 L7 8" stroke="#f8e080" stroke-width="1"/></svg>
<div class="ui" style="left:50px;top:778px;font-size:12px;letter-spacing:-0.5px;color:#c8c8c8">BuiltInTypes</div>
<svg style="left:9px;top:802px" width="7" height="10" viewBox="0 0 7 10"><path d="M1 1 L5 5 L1 9" fill="none" stroke="#b8b8b8" stroke-width="1.2"/></svg>
<svg style="left:26px;top:798px" width="12" height="16" viewBox="0 0 12 16"><path d="M1 3 L9 1 V13 L1 15 Z" fill="#e03030" stroke="#801010" stroke-width="0.6"/><path d="M9 1 L11 2 V14 L9 13" fill="#f4e8c0"/><path d="M3 6 L7 5 M3 9 L7 8" stroke="#f8e080" stroke-width="1"/></svg>
<svg style="left:40px;top:801px" width="10" height="10" viewBox="0 0 10 10"><circle cx="5" cy="5" r="4.6" fill="#2a70c8" stroke="#d0e0f0" stroke-width="0.6"/><path d="M2.5 5 L4.5 7 L7.5 3" fill="none" stroke="#fff" stroke-width="1.4"/></svg>
<div class="ui" style="left:49px;top:798px;font-size:12px;letter-spacing:-0.5px;color:#c8c8c8">lk_a_noOrangeState.bin</div>
<svg style="left:9px;top:822px" width="7" height="10" viewBox="0 0 7 10"><path d="M1 1 L5 5 L1 9" fill="none" stroke="#b8b8b8" stroke-width="1.2"/></svg>
<svg style="left:26px;top:818px" width="12" height="16" viewBox="0 0 12 16"><path d="M1 3 L9 1 V13 L1 15 Z" fill="#30a040" stroke="#106020" stroke-width="0.6"/><path d="M9 1 L11 2 V14 L9 13" fill="#f4e8c0"/><path d="M3 6 L7 5 M3 9 L7 8" stroke="#f8e080" stroke-width="1"/></svg>
<div class="ui" style="left:50px;top:818px;font-size:12px;letter-spacing:-0.5px;color:#c8c8c8">generic_clib</div>
<svg style="left:3px;top:1033px" width="16" height="16" viewBox="0 0 16 16"><circle cx="8" cy="8" r="7.5" fill="#f4f4f4" stroke="#222" stroke-width="0.8"/><path d="M3 9 L7 6 L9 3 L11 3 L12 5 L13 8 L11 10 L10 13 L8 12 L9 9 L6 10 Z" fill="#e02020"/></svg>
<div style="left:23px;top:1030px;width:1411px;height:26px;background:#3c3f41;border-top:1px solid #252628;border-left:1px solid #252628;border-right:1px solid #77797b;border-bottom:1px solid #77797b"></div>
<div style="left:1439px;top:1030px;width:101px;height:26px;background:#3c3f41;border-top:1px solid #252628;border-left:1px solid #252628;border-right:1px solid #77797b;border-bottom:1px solid #77797b"></div>
<div class="ui" style="left:1442px;top:1031px;font-size:12px;letter-spacing:-0.5px;color:#c0c0c0">00056c8e</div>
<div style="left:1545px;top:1030px;width:136px;height:26px;background:#3c3f41;border-top:1px solid #252628;border-left:1px solid #252628;border-right:1px solid #77797b;border-bottom:1px solid #77797b"></div>
<div class="ui" style="left:1548px;top:1031px;font-size:12px;letter-spacing:-0.5px;color:#c0c0c0"> FUN_00056c40</div>
<div style="left:1686px;top:1030px;width:206px;height:26px;background:#3c3f41;border-top:1px solid #252628;border-left:1px solid #252628;border-right:1px solid #77797b;border-bottom:1px solid #77797b"></div>
<div class="ui" style="left:1689px;top:1031px;font-size:12px;letter-spacing:-0.5px;color:#c0c0c0"> add r0,pc</div>
<div style="left:1897px;top:1030px;width:28px;height:26px;background:#3c3f41;border-top:1px solid #252628;border-left:1px solid #252628;border-right:1px solid #77797b;border-bottom:1px solid #77797b"></div>
<svg style="left:208px;top:450px" width="18" height="12" viewBox="0 0 18 12"><path d="M1 5 H11 V1.5 L16 6 L11 10.5 V7 H1 Z" fill="#fff" stroke="#000" stroke-width="1"/></svg>
<div style="left:1387px;top:60px;width:532px;height:781px;border:4px solid #ff0000;border-radius:3px"></div>
</div></body></html>
